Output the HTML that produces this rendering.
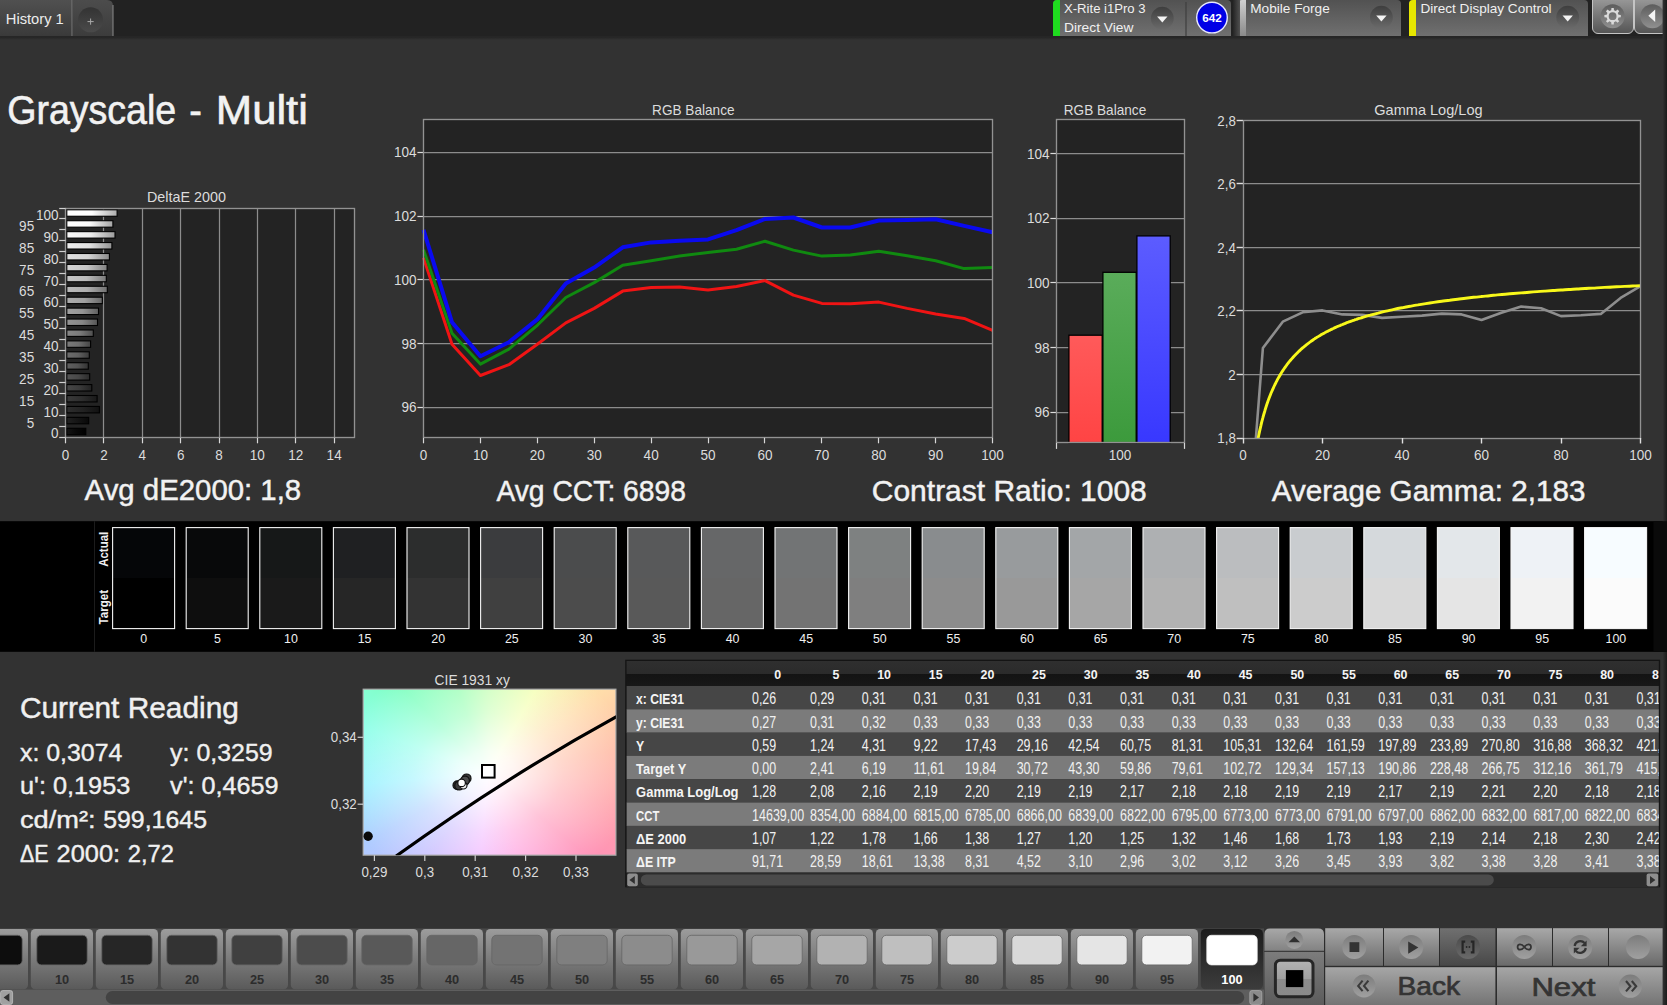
<!DOCTYPE html>
<html lang="en"><head><meta charset="utf-8"><title>Grayscale - Multi</title>
<style>
html,body{margin:0;padding:0;background:#323232;overflow:hidden}
#app{position:relative;width:1667px;height:1005px;overflow:hidden;background:#323232;font-family:"Liberation Sans", sans-serif}
#cie{position:absolute;left:363px;top:689px;width:253px;height:166px;
background:radial-gradient(circle at 0 0,#86ffc6 0,rgba(134,255,198,0) 150px),radial-gradient(circle at 100% 0,#ffdcaa 0,rgba(255,220,170,0) 150px),radial-gradient(circle at 100% 100%,#ff8cb4 0,rgba(255,140,180,0) 170px),radial-gradient(circle at 0 100%,#aac8ff 0,rgba(170,200,255,0) 150px),#ffffff;
background:
radial-gradient(ellipse 150px 120px at 125px 84px, rgba(255,255,255,1) 0%, rgba(255,255,255,.85) 18%, rgba(255,255,255,.45) 50%, rgba(255,255,255,0) 100%),
conic-gradient(from 0deg at 125px 84px, #c4ffb4 0deg, #f4ffb0 30deg, #ffdcaa 55deg, #ffbaa4 80deg, #ffa2aa 105deg, #ff92b8 130deg, #ffa4e0 160deg, #f2b8ff 185deg, #c8bcff 215deg, #aeccff 240deg, #98f2ff 265deg, #8cffe8 290deg, #80ffc0 315deg, #98ffb4 340deg, #c4ffb4 360deg);}
svg{position:absolute;left:0;top:0}
</style></head><body>
<div id="app">
<div id="cie"></div>
<svg width="1667" height="1005" viewBox="0 0 1667 1005" font-family='"Liberation Sans", sans-serif'>
<defs>
<linearGradient id="gTab" x1="0" y1="0" x2="0" y2="1"><stop offset="0" stop-color="#505050"/><stop offset="1" stop-color="#3a3a3a"/></linearGradient>
<linearGradient id="gTab2" x1="0" y1="0" x2="0" y2="1"><stop offset="0" stop-color="#4c4c4c"/><stop offset="1" stop-color="#3c3c3c"/></linearGradient>
<linearGradient id="gPanel" x1="0" y1="0" x2="0" y2="1"><stop offset="0" stop-color="#525252"/><stop offset="1" stop-color="#707070"/></linearGradient>
<linearGradient id="gShadeH" x1="0" y1="0" x2="1" y2="0"><stop offset="0" stop-color="#222222"/><stop offset="1" stop-color="#505050"/></linearGradient>
<linearGradient id="gCirc" x1="0" y1="0" x2="0" y2="1"><stop offset="0" stop-color="#3e3e3e"/><stop offset="1" stop-color="#6a6a6a"/></linearGradient>
<linearGradient id="gCircD" x1="0" y1="0" x2="0" y2="1"><stop offset="0" stop-color="#333333"/><stop offset="1" stop-color="#4a4a4a"/></linearGradient>
<linearGradient id="gBtnTop" x1="0" y1="0" x2="0" y2="1"><stop offset="0" stop-color="#a2a2a2"/><stop offset="1" stop-color="#545454"/></linearGradient>
<linearGradient id="gCircB" x1="0" y1="0" x2="0" y2="1"><stop offset="0" stop-color="#5c5c5c"/><stop offset="1" stop-color="#909090"/></linearGradient>
<linearGradient id="gLightBar" x1="0" y1="0" x2="0" y2="1"><stop offset="0" stop-color="#d0d0d0"/><stop offset="1" stop-color="#8a8a8a"/></linearGradient>
<linearGradient id="gShadow" x1="0" y1="0" x2="0" y2="1"><stop offset="0" stop-color="#222222"/><stop offset="1" stop-color="#323232"/></linearGradient>
<linearGradient id="gRed" x1="0" y1="0" x2="0" y2="1"><stop offset="0" stop-color="#ff5a5a"/><stop offset="1" stop-color="#ff4444"/></linearGradient>
<linearGradient id="gGreen" x1="0" y1="0" x2="0" y2="1"><stop offset="0" stop-color="#5aac5a"/><stop offset="1" stop-color="#3c9a3c"/></linearGradient>
<linearGradient id="gBlue" x1="0" y1="0" x2="0" y2="1"><stop offset="0" stop-color="#5c5cff"/><stop offset="1" stop-color="#3838ff"/></linearGradient>
<linearGradient id="gTile" x1="0" y1="0" x2="0" y2="1"><stop offset="0" stop-color="#9c9c9c"/><stop offset="1" stop-color="#5a5a5a"/></linearGradient>
<linearGradient id="gTileSel" x1="0" y1="0" x2="0" y2="1"><stop offset="0" stop-color="#1c1c1c"/><stop offset="1" stop-color="#3c3c3c"/></linearGradient>
<linearGradient id="gBtn" x1="0" y1="0" x2="0" y2="1"><stop offset="0" stop-color="#a8a8a8"/><stop offset="1" stop-color="#6a6a6a"/></linearGradient>
<linearGradient id="gBtnSel" x1="0" y1="0" x2="0" y2="1"><stop offset="0" stop-color="#707070"/><stop offset="1" stop-color="#484848"/></linearGradient>
<linearGradient id="gBig" x1="0" y1="0" x2="0" y2="1"><stop offset="0" stop-color="#a6a6a6"/><stop offset="1" stop-color="#747474"/></linearGradient>
<linearGradient id="gUp" x1="0" y1="0" x2="0" y2="1"><stop offset="0" stop-color="#a8a8a8"/><stop offset="1" stop-color="#828282"/></linearGradient>
<linearGradient id="gLow" x1="0" y1="0" x2="0" y2="1"><stop offset="0" stop-color="#7c7c7c"/><stop offset="1" stop-color="#5c5c5c"/></linearGradient>
<linearGradient id="gBall" x1="0" y1="0" x2="0" y2="1"><stop offset="0" stop-color="#7c7c7c"/><stop offset="1" stop-color="#a0a0a0"/></linearGradient>
<linearGradient id="gBallSel" x1="0" y1="0" x2="0" y2="1"><stop offset="0" stop-color="#4a4a4a"/><stop offset="1" stop-color="#6a6a6a"/></linearGradient>
<linearGradient id="gIcon" x1="0" y1="0" x2="0" y2="1"><stop offset="0" stop-color="#b4b4b4"/><stop offset="0.5" stop-color="#a0a0a0"/><stop offset="0.5" stop-color="#8c8c8c"/><stop offset="1" stop-color="#8a8a8a"/></linearGradient>
<linearGradient id="gEdge" x1="0" y1="0" x2="1" y2="0"><stop offset="0" stop-color="#323232"/><stop offset="1" stop-color="#1a1a1a"/></linearGradient>
<linearGradient id="gHdr" x1="0" y1="0" x2="0" y2="1"><stop offset="0" stop-color="#2f2f2f"/><stop offset="0.52" stop-color="#2b2b2b"/><stop offset="0.52" stop-color="#131313"/><stop offset="1" stop-color="#181818"/></linearGradient>
</defs>
<rect x="0.00" y="0.00" width="1667.00" height="36.50" fill="#222222"/>
<rect x="0.00" y="36.50" width="1667.00" height="3.50" fill="url(#gShadow)"/>
<rect x="0.00" y="0.00" width="72.00" height="36.00" fill="url(#gTab)"/>
<path d="M72.5 0 H107 Q113 0 113 6 V36 H72.5 Z" fill="url(#gTab2)"/>
<line x1="72.00" y1="0.00" x2="72.00" y2="36.00" stroke="#7a7a7a" stroke-width="1"/>
<line x1="113.00" y1="5.00" x2="113.00" y2="36.00" stroke="#8a8a8a" stroke-width="1"/>
<circle cx="90.6" cy="19.8" r="12.5" fill="url(#gCircD)"/>
<line x1="87.50" y1="21.60" x2="93.70" y2="21.60" stroke="#a8a8a8" stroke-width="1"/>
<line x1="90.60" y1="18.50" x2="90.60" y2="24.70" stroke="#a8a8a8" stroke-width="1"/>
<text x="5.8" y="24.0" font-size="14.6" textLength="58.0" lengthAdjust="spacingAndGlyphs" fill="#ececec">History 1</text>
<path d="M1053.0 36 V4 Q1053.0 0 1057.0 0 H1227.0 Q1231.0 0 1231.0 4 V36 Z" fill="url(#gPanel)"/>
<path d="M1053.0 36 V4 Q1053.0 0 1057.0 0 H1060.0 V36 Z" fill="#1fdc1f"/>
<line x1="1186.00" y1="2.00" x2="1186.00" y2="36.00" stroke="#3e3e3e" stroke-width="1.2"/>
<circle cx="1162.3" cy="18.2" r="11.4" fill="url(#gCirc)"/>
<path d="M1157.1 16.6 h10.4 l-5.2 6 Z" fill="#f4f4f4"/>
<text x="1064.0" y="12.8" font-size="13.3" textLength="81.6" lengthAdjust="spacingAndGlyphs" fill="#f0f0f0">X-Rite i1Pro 3</text>
<text x="1064.0" y="31.5" font-size="13.3" textLength="69.5" lengthAdjust="spacingAndGlyphs" fill="#f0f0f0">Direct View</text>
<circle cx="1212" cy="17.6" r="15.3" fill="#0000e6" stroke="#e8e8ff" stroke-width="1.4"/>
<text x="1202.2" y="21.8" font-size="11.5" font-weight="bold" textLength="19.5" lengthAdjust="spacingAndGlyphs" fill="#ffffff">642</text>
<path d="M1238.0 36 V4 Q1238.0 0 1242.0 0 H1397.0 Q1401.0 0 1401.0 4 V36 Z" fill="url(#gPanel)"/>
<path d="M1238.0 36 V4 Q1238.0 0 1242.0 0 H1246.0 V36 Z" fill="url(#gLightBar)"/>
<rect x="1232.50" y="0.00" width="7.50" height="36.00" fill="url(#gShadeH)"/>
<circle cx="1381.4" cy="17.2" r="11.4" fill="url(#gCirc)"/>
<path d="M1376.2 15.6 h10.4 l-5.2 6 Z" fill="#f4f4f4"/>
<text x="1250.2" y="12.8" font-size="13.3" textLength="79.6" lengthAdjust="spacingAndGlyphs" fill="#f0f0f0">Mobile Forge</text>
<path d="M1409.0 36 V4 Q1409.0 0 1413.0 0 H1584.0 Q1588.0 0 1588.0 4 V36 Z" fill="url(#gPanel)"/>
<path d="M1409.0 36 V4 Q1409.0 0 1413.0 0 H1416.0 V36 Z" fill="#e6e600"/>
<circle cx="1567.7" cy="17.2" r="11.4" fill="url(#gCirc)"/>
<path d="M1562.5 15.6 h10.4 l-5.2 6 Z" fill="#f4f4f4"/>
<text x="1420.4" y="12.8" font-size="13.3" textLength="131.2" lengthAdjust="spacingAndGlyphs" fill="#f0f0f0">Direct Display Control</text>
<rect x="1592.5" y="-6" width="41" height="39.5" rx="5.5" fill="url(#gBtnTop)" stroke="#c4c4c4" stroke-width="1"/>
<rect x="1634.5" y="-6" width="41" height="39.5" rx="5.5" fill="url(#gBtnTop)" stroke="#c4c4c4" stroke-width="1"/>
<circle cx="1612.6" cy="16.2" r="12" fill="url(#gCircB)"/>
<circle cx="1652.4" cy="16.2" r="12" fill="url(#gCircB)"/>
<path d="M1611.23 10.26 L1611.44 7.98 L1613.76 7.98 L1613.97 10.26 L1615.83 11.03 L1617.60 9.57 L1619.23 11.20 L1617.77 12.97 L1618.54 14.83 L1620.82 15.04 L1620.82 17.36 L1618.54 17.57 L1617.77 19.43 L1619.23 21.20 L1617.60 22.83 L1615.83 21.37 L1613.97 22.14 L1613.76 24.42 L1611.44 24.42 L1611.23 22.14 L1609.37 21.37 L1607.60 22.83 L1605.97 21.20 L1607.43 19.43 L1606.66 17.57 L1604.38 17.36 L1604.38 15.04 L1606.66 14.83 L1607.43 12.97 L1605.97 11.20 L1607.60 9.57 L1609.37 11.03 Z M1608.70 16.20 a3.90 3.90 0 1 0 7.80 0 a3.90 3.90 0 1 0 -7.80 0 Z" fill="#dadada" fill-rule="evenodd"/>
<path d="M1655.2 9.4 V22 L1648.3 15.7 Z" fill="#f4f4f4"/>
<text y="123.5" font-size="40" stroke="#f2f2f2" stroke-width="0.6" fill="#f2f2f2"><tspan x="7.3" textLength="168.9" lengthAdjust="spacingAndGlyphs">Grayscale</tspan> <tspan x="189.2" textLength="12.6" lengthAdjust="spacingAndGlyphs">-</tspan> <tspan x="215.8" textLength="92.1" lengthAdjust="spacingAndGlyphs">Multi</tspan></text>
<rect x="65.60" y="208.40" width="288.70" height="229.40" fill="#232323"/>
<line x1="103.50" y1="208.40" x2="103.50" y2="437.80" stroke="#8c8c8c" stroke-width="1.25"/>
<line x1="142.50" y1="208.40" x2="142.50" y2="437.80" stroke="#8c8c8c" stroke-width="1.25"/>
<line x1="180.50" y1="208.40" x2="180.50" y2="437.80" stroke="#8c8c8c" stroke-width="1.25"/>
<line x1="219.50" y1="208.40" x2="219.50" y2="437.80" stroke="#8c8c8c" stroke-width="1.25"/>
<line x1="257.50" y1="208.40" x2="257.50" y2="437.80" stroke="#8c8c8c" stroke-width="1.25"/>
<line x1="295.50" y1="208.40" x2="295.50" y2="437.80" stroke="#8c8c8c" stroke-width="1.25"/>
<line x1="334.50" y1="208.40" x2="334.50" y2="437.80" stroke="#8c8c8c" stroke-width="1.25"/>
<linearGradient id="gb0" x1="0" y1="0" x2="1" y2="0"><stop offset="0" stop-color="rgb(20,20,20)"/><stop offset="0.5" stop-color="rgb(8,8,8)"/><stop offset="1" stop-color="rgb(0,0,0)"/></linearGradient>
<rect x="66.8" y="428.28" width="19.0" height="6.45" fill="url(#gb0)" stroke="#000" stroke-width="1.1"/>
<linearGradient id="gb1" x1="0" y1="0" x2="1" y2="0"><stop offset="0" stop-color="rgb(33,33,33)"/><stop offset="0.5" stop-color="rgb(21,21,21)"/><stop offset="1" stop-color="rgb(8,8,8)"/></linearGradient>
<rect x="66.8" y="417.35" width="21.9" height="6.45" fill="url(#gb1)" stroke="#000" stroke-width="1.1"/>
<linearGradient id="gb2" x1="0" y1="0" x2="1" y2="0"><stop offset="0" stop-color="rgb(46,46,46)"/><stop offset="0.5" stop-color="rgb(34,34,34)"/><stop offset="1" stop-color="rgb(17,17,17)"/></linearGradient>
<rect x="66.8" y="406.43" width="32.6" height="6.45" fill="url(#gb2)" stroke="#000" stroke-width="1.1"/>
<linearGradient id="gb3" x1="0" y1="0" x2="1" y2="0"><stop offset="0" stop-color="rgb(58,58,58)"/><stop offset="0.5" stop-color="rgb(46,46,46)"/><stop offset="1" stop-color="rgb(25,25,25)"/></linearGradient>
<rect x="66.8" y="395.50" width="30.3" height="6.45" fill="url(#gb3)" stroke="#000" stroke-width="1.1"/>
<linearGradient id="gb4" x1="0" y1="0" x2="1" y2="0"><stop offset="0" stop-color="rgb(71,71,71)"/><stop offset="0.5" stop-color="rgb(59,59,59)"/><stop offset="1" stop-color="rgb(34,34,34)"/></linearGradient>
<rect x="66.8" y="384.58" width="25.0" height="6.45" fill="url(#gb4)" stroke="#000" stroke-width="1.1"/>
<linearGradient id="gb5" x1="0" y1="0" x2="1" y2="0"><stop offset="0" stop-color="rgb(84,84,84)"/><stop offset="0.5" stop-color="rgb(72,72,72)"/><stop offset="1" stop-color="rgb(43,43,43)"/></linearGradient>
<rect x="66.8" y="373.66" width="22.9" height="6.45" fill="url(#gb5)" stroke="#000" stroke-width="1.1"/>
<linearGradient id="gb6" x1="0" y1="0" x2="1" y2="0"><stop offset="0" stop-color="rgb(96,96,96)"/><stop offset="0.5" stop-color="rgb(84,84,84)"/><stop offset="1" stop-color="rgb(51,51,51)"/></linearGradient>
<rect x="66.8" y="362.73" width="21.5" height="6.45" fill="url(#gb6)" stroke="#000" stroke-width="1.1"/>
<linearGradient id="gb7" x1="0" y1="0" x2="1" y2="0"><stop offset="0" stop-color="rgb(109,109,109)"/><stop offset="0.5" stop-color="rgb(97,97,97)"/><stop offset="1" stop-color="rgb(60,60,60)"/></linearGradient>
<rect x="66.8" y="351.81" width="22.5" height="6.45" fill="url(#gb7)" stroke="#000" stroke-width="1.1"/>
<linearGradient id="gb8" x1="0" y1="0" x2="1" y2="0"><stop offset="0" stop-color="rgb(122,122,122)"/><stop offset="0.5" stop-color="rgb(110,110,110)"/><stop offset="1" stop-color="rgb(69,69,69)"/></linearGradient>
<rect x="66.8" y="340.89" width="23.8" height="6.45" fill="url(#gb8)" stroke="#000" stroke-width="1.1"/>
<linearGradient id="gb9" x1="0" y1="0" x2="1" y2="0"><stop offset="0" stop-color="rgb(135,135,135)"/><stop offset="0.5" stop-color="rgb(123,123,123)"/><stop offset="1" stop-color="rgb(78,78,78)"/></linearGradient>
<rect x="66.8" y="329.96" width="26.5" height="6.45" fill="url(#gb9)" stroke="#000" stroke-width="1.1"/>
<linearGradient id="gb10" x1="0" y1="0" x2="1" y2="0"><stop offset="0" stop-color="rgb(147,147,147)"/><stop offset="0.5" stop-color="rgb(135,135,135)"/><stop offset="1" stop-color="rgb(86,86,86)"/></linearGradient>
<rect x="66.8" y="319.04" width="30.7" height="6.45" fill="url(#gb10)" stroke="#000" stroke-width="1.1"/>
<linearGradient id="gb11" x1="0" y1="0" x2="1" y2="0"><stop offset="0" stop-color="rgb(160,160,160)"/><stop offset="0.5" stop-color="rgb(148,148,148)"/><stop offset="1" stop-color="rgb(95,95,95)"/></linearGradient>
<rect x="66.8" y="308.11" width="31.7" height="6.45" fill="url(#gb11)" stroke="#000" stroke-width="1.1"/>
<linearGradient id="gb12" x1="0" y1="0" x2="1" y2="0"><stop offset="0" stop-color="rgb(173,173,173)"/><stop offset="0.5" stop-color="rgb(161,161,161)"/><stop offset="1" stop-color="rgb(104,104,104)"/></linearGradient>
<rect x="66.8" y="297.19" width="35.5" height="6.45" fill="url(#gb12)" stroke="#000" stroke-width="1.1"/>
<linearGradient id="gb13" x1="0" y1="0" x2="1" y2="0"><stop offset="0" stop-color="rgb(186,186,186)"/><stop offset="0.5" stop-color="rgb(174,174,174)"/><stop offset="1" stop-color="rgb(112,112,112)"/></linearGradient>
<rect x="66.8" y="286.27" width="40.5" height="6.45" fill="url(#gb13)" stroke="#000" stroke-width="1.1"/>
<linearGradient id="gb14" x1="0" y1="0" x2="1" y2="0"><stop offset="0" stop-color="rgb(198,198,198)"/><stop offset="0.5" stop-color="rgb(186,186,186)"/><stop offset="1" stop-color="rgb(121,121,121)"/></linearGradient>
<rect x="66.8" y="275.34" width="39.5" height="6.45" fill="url(#gb14)" stroke="#000" stroke-width="1.1"/>
<linearGradient id="gb15" x1="0" y1="0" x2="1" y2="0"><stop offset="0" stop-color="rgb(211,211,211)"/><stop offset="0.5" stop-color="rgb(199,199,199)"/><stop offset="1" stop-color="rgb(129,129,129)"/></linearGradient>
<rect x="66.8" y="264.42" width="40.3" height="6.45" fill="url(#gb15)" stroke="#000" stroke-width="1.1"/>
<linearGradient id="gb16" x1="0" y1="0" x2="1" y2="0"><stop offset="0" stop-color="rgb(224,224,224)"/><stop offset="0.5" stop-color="rgb(212,212,212)"/><stop offset="1" stop-color="rgb(138,138,138)"/></linearGradient>
<rect x="66.8" y="253.50" width="42.6" height="6.45" fill="url(#gb16)" stroke="#000" stroke-width="1.1"/>
<linearGradient id="gb17" x1="0" y1="0" x2="1" y2="0"><stop offset="0" stop-color="rgb(237,237,237)"/><stop offset="0.5" stop-color="rgb(225,225,225)"/><stop offset="1" stop-color="rgb(147,147,147)"/></linearGradient>
<rect x="66.8" y="242.57" width="45.1" height="6.45" fill="url(#gb17)" stroke="#000" stroke-width="1.1"/>
<linearGradient id="gb18" x1="0" y1="0" x2="1" y2="0"><stop offset="0" stop-color="rgb(249,249,249)"/><stop offset="0.5" stop-color="rgb(237,237,237)"/><stop offset="1" stop-color="rgb(155,155,155)"/></linearGradient>
<rect x="66.8" y="231.65" width="48.2" height="6.45" fill="url(#gb18)" stroke="#000" stroke-width="1.1"/>
<linearGradient id="gb19" x1="0" y1="0" x2="1" y2="0"><stop offset="0" stop-color="rgb(255,255,255)"/><stop offset="0.5" stop-color="rgb(250,250,250)"/><stop offset="1" stop-color="rgb(164,164,164)"/></linearGradient>
<rect x="66.8" y="220.72" width="46.1" height="6.45" fill="url(#gb19)" stroke="#000" stroke-width="1.1"/>
<linearGradient id="gb20" x1="0" y1="0" x2="1" y2="0"><stop offset="0" stop-color="rgb(255,255,255)"/><stop offset="0.5" stop-color="rgb(255,255,255)"/><stop offset="1" stop-color="rgb(173,173,173)"/></linearGradient>
<rect x="66.8" y="209.80" width="50.3" height="6.45" fill="url(#gb20)" stroke="#000" stroke-width="1.1"/>
<rect x="65.5" y="208.5" width="289.0" height="229.0" fill="none" stroke="#929292" stroke-width="1.35"/>
<line x1="59.20" y1="437.50" x2="65.60" y2="437.50" stroke="#d0d0d0" stroke-width="1.2"/>
<line x1="59.20" y1="426.50" x2="65.60" y2="426.50" stroke="#d0d0d0" stroke-width="1.2"/>
<line x1="59.20" y1="415.50" x2="65.60" y2="415.50" stroke="#d0d0d0" stroke-width="1.2"/>
<line x1="59.20" y1="404.50" x2="65.60" y2="404.50" stroke="#d0d0d0" stroke-width="1.2"/>
<line x1="59.20" y1="393.50" x2="65.60" y2="393.50" stroke="#d0d0d0" stroke-width="1.2"/>
<line x1="59.20" y1="382.50" x2="65.60" y2="382.50" stroke="#d0d0d0" stroke-width="1.2"/>
<line x1="59.20" y1="371.50" x2="65.60" y2="371.50" stroke="#d0d0d0" stroke-width="1.2"/>
<line x1="59.20" y1="360.50" x2="65.60" y2="360.50" stroke="#d0d0d0" stroke-width="1.2"/>
<line x1="59.20" y1="350.50" x2="65.60" y2="350.50" stroke="#d0d0d0" stroke-width="1.2"/>
<line x1="59.20" y1="339.50" x2="65.60" y2="339.50" stroke="#d0d0d0" stroke-width="1.2"/>
<line x1="59.20" y1="328.50" x2="65.60" y2="328.50" stroke="#d0d0d0" stroke-width="1.2"/>
<line x1="59.20" y1="317.50" x2="65.60" y2="317.50" stroke="#d0d0d0" stroke-width="1.2"/>
<line x1="59.20" y1="306.50" x2="65.60" y2="306.50" stroke="#d0d0d0" stroke-width="1.2"/>
<line x1="59.20" y1="295.50" x2="65.60" y2="295.50" stroke="#d0d0d0" stroke-width="1.2"/>
<line x1="59.20" y1="284.50" x2="65.60" y2="284.50" stroke="#d0d0d0" stroke-width="1.2"/>
<line x1="59.20" y1="273.50" x2="65.60" y2="273.50" stroke="#d0d0d0" stroke-width="1.2"/>
<line x1="59.20" y1="262.50" x2="65.60" y2="262.50" stroke="#d0d0d0" stroke-width="1.2"/>
<line x1="59.20" y1="251.50" x2="65.60" y2="251.50" stroke="#d0d0d0" stroke-width="1.2"/>
<line x1="59.20" y1="240.50" x2="65.60" y2="240.50" stroke="#d0d0d0" stroke-width="1.2"/>
<line x1="59.20" y1="229.50" x2="65.60" y2="229.50" stroke="#d0d0d0" stroke-width="1.2"/>
<line x1="59.20" y1="218.50" x2="65.60" y2="218.50" stroke="#d0d0d0" stroke-width="1.2"/>
<line x1="59.20" y1="208.50" x2="65.60" y2="208.50" stroke="#d0d0d0" stroke-width="1.2"/>
<text x="51.1" y="438.4" font-size="14.4" textLength="7.5" lengthAdjust="spacingAndGlyphs" fill="#dcdcdc">0</text>
<text x="26.7" y="427.5" font-size="14.4" textLength="7.5" lengthAdjust="spacingAndGlyphs" fill="#dcdcdc">5</text>
<text x="43.5" y="416.6" font-size="14.4" textLength="15.1" lengthAdjust="spacingAndGlyphs" fill="#dcdcdc">10</text>
<text x="19.1" y="405.7" font-size="14.4" textLength="15.1" lengthAdjust="spacingAndGlyphs" fill="#dcdcdc">15</text>
<text x="43.5" y="394.7" font-size="14.4" textLength="15.1" lengthAdjust="spacingAndGlyphs" fill="#dcdcdc">20</text>
<text x="19.1" y="383.8" font-size="14.4" textLength="15.1" lengthAdjust="spacingAndGlyphs" fill="#dcdcdc">25</text>
<text x="43.5" y="372.9" font-size="14.4" textLength="15.1" lengthAdjust="spacingAndGlyphs" fill="#dcdcdc">30</text>
<text x="19.1" y="362.0" font-size="14.4" textLength="15.1" lengthAdjust="spacingAndGlyphs" fill="#dcdcdc">35</text>
<text x="43.5" y="351.0" font-size="14.4" textLength="15.1" lengthAdjust="spacingAndGlyphs" fill="#dcdcdc">40</text>
<text x="19.1" y="340.1" font-size="14.4" textLength="15.1" lengthAdjust="spacingAndGlyphs" fill="#dcdcdc">45</text>
<text x="43.5" y="329.2" font-size="14.4" textLength="15.1" lengthAdjust="spacingAndGlyphs" fill="#dcdcdc">50</text>
<text x="19.1" y="318.3" font-size="14.4" textLength="15.1" lengthAdjust="spacingAndGlyphs" fill="#dcdcdc">55</text>
<text x="43.5" y="307.4" font-size="14.4" textLength="15.1" lengthAdjust="spacingAndGlyphs" fill="#dcdcdc">60</text>
<text x="19.1" y="296.4" font-size="14.4" textLength="15.1" lengthAdjust="spacingAndGlyphs" fill="#dcdcdc">65</text>
<text x="43.5" y="285.5" font-size="14.4" textLength="15.1" lengthAdjust="spacingAndGlyphs" fill="#dcdcdc">70</text>
<text x="19.1" y="274.6" font-size="14.4" textLength="15.1" lengthAdjust="spacingAndGlyphs" fill="#dcdcdc">75</text>
<text x="43.5" y="263.7" font-size="14.4" textLength="15.1" lengthAdjust="spacingAndGlyphs" fill="#dcdcdc">80</text>
<text x="19.1" y="252.7" font-size="14.4" textLength="15.1" lengthAdjust="spacingAndGlyphs" fill="#dcdcdc">85</text>
<text x="43.5" y="241.8" font-size="14.4" textLength="15.1" lengthAdjust="spacingAndGlyphs" fill="#dcdcdc">90</text>
<text x="19.1" y="230.9" font-size="14.4" textLength="15.1" lengthAdjust="spacingAndGlyphs" fill="#dcdcdc">95</text>
<text x="36.0" y="220.0" font-size="14.4" textLength="22.6" lengthAdjust="spacingAndGlyphs" fill="#dcdcdc">100</text>
<line x1="65.50" y1="437.80" x2="65.50" y2="443.30" stroke="#d8d8d8" stroke-width="1.2"/>
<text x="61.8" y="460.0" font-size="14.4" textLength="7.5" lengthAdjust="spacingAndGlyphs" fill="#dcdcdc">0</text>
<line x1="103.50" y1="437.80" x2="103.50" y2="443.30" stroke="#d8d8d8" stroke-width="1.2"/>
<text x="100.2" y="460.0" font-size="14.4" textLength="7.5" lengthAdjust="spacingAndGlyphs" fill="#dcdcdc">2</text>
<line x1="142.50" y1="437.80" x2="142.50" y2="443.30" stroke="#d8d8d8" stroke-width="1.2"/>
<text x="138.5" y="460.0" font-size="14.4" textLength="7.5" lengthAdjust="spacingAndGlyphs" fill="#dcdcdc">4</text>
<line x1="180.50" y1="437.80" x2="180.50" y2="443.30" stroke="#d8d8d8" stroke-width="1.2"/>
<text x="176.9" y="460.0" font-size="14.4" textLength="7.5" lengthAdjust="spacingAndGlyphs" fill="#dcdcdc">6</text>
<line x1="219.50" y1="437.80" x2="219.50" y2="443.30" stroke="#d8d8d8" stroke-width="1.2"/>
<text x="215.3" y="460.0" font-size="14.4" textLength="7.5" lengthAdjust="spacingAndGlyphs" fill="#dcdcdc">8</text>
<line x1="257.50" y1="437.80" x2="257.50" y2="443.30" stroke="#d8d8d8" stroke-width="1.2"/>
<text x="249.8" y="460.0" font-size="14.4" textLength="15.1" lengthAdjust="spacingAndGlyphs" fill="#dcdcdc">10</text>
<line x1="295.50" y1="437.80" x2="295.50" y2="443.30" stroke="#d8d8d8" stroke-width="1.2"/>
<text x="288.2" y="460.0" font-size="14.4" textLength="15.1" lengthAdjust="spacingAndGlyphs" fill="#dcdcdc">12</text>
<line x1="334.50" y1="437.80" x2="334.50" y2="443.30" stroke="#d8d8d8" stroke-width="1.2"/>
<text x="326.6" y="460.0" font-size="14.4" textLength="15.1" lengthAdjust="spacingAndGlyphs" fill="#dcdcdc">14</text>
<text x="146.9" y="202.0" font-size="14.4" textLength="79.0" lengthAdjust="spacingAndGlyphs" fill="#dcdcdc">DeltaE 2000</text>
<rect x="423.50" y="119.60" width="569.10" height="318.20" fill="#232323"/>
<line x1="423.50" y1="407.50" x2="992.60" y2="407.50" stroke="#8c8c8c" stroke-width="1.25"/>
<line x1="417.40" y1="407.50" x2="423.50" y2="407.50" stroke="#dcdcdc" stroke-width="1.2"/>
<text x="401.5" y="412.2" font-size="14.4" textLength="15.1" lengthAdjust="spacingAndGlyphs" fill="#dcdcdc">96</text>
<line x1="423.50" y1="343.50" x2="992.60" y2="343.50" stroke="#8c8c8c" stroke-width="1.25"/>
<line x1="417.40" y1="343.50" x2="423.50" y2="343.50" stroke="#dcdcdc" stroke-width="1.2"/>
<text x="401.5" y="348.6" font-size="14.4" textLength="15.1" lengthAdjust="spacingAndGlyphs" fill="#dcdcdc">98</text>
<line x1="423.50" y1="279.50" x2="992.60" y2="279.50" stroke="#8c8c8c" stroke-width="1.25"/>
<line x1="417.40" y1="279.50" x2="423.50" y2="279.50" stroke="#dcdcdc" stroke-width="1.2"/>
<text x="394.0" y="284.9" font-size="14.4" textLength="22.6" lengthAdjust="spacingAndGlyphs" fill="#dcdcdc">100</text>
<line x1="423.50" y1="216.50" x2="992.60" y2="216.50" stroke="#8c8c8c" stroke-width="1.25"/>
<line x1="417.40" y1="216.50" x2="423.50" y2="216.50" stroke="#dcdcdc" stroke-width="1.2"/>
<text x="394.0" y="221.1" font-size="14.4" textLength="22.6" lengthAdjust="spacingAndGlyphs" fill="#dcdcdc">102</text>
<line x1="423.50" y1="152.50" x2="992.60" y2="152.50" stroke="#8c8c8c" stroke-width="1.25"/>
<line x1="417.40" y1="152.50" x2="423.50" y2="152.50" stroke="#dcdcdc" stroke-width="1.2"/>
<text x="394.0" y="157.4" font-size="14.4" textLength="22.6" lengthAdjust="spacingAndGlyphs" fill="#dcdcdc">104</text>
<polyline points="423.5,257.7 452.0,344.2 480.4,375.5 508.9,364.7 537.3,344.2 565.8,322.9 594.2,308.4 622.7,291.1 651.1,287.5 679.6,286.9 708.0,290.0 736.5,286.5 765.0,280.6 793.4,295.1 821.9,303.4 850.3,303.8 878.8,302.1 907.2,308.4 935.7,314.0 964.1,318.4 992.6,330.3" fill="none" stroke="#f01414" stroke-width="3.0" stroke-linejoin="round"/>
<polyline points="423.5,249.7 452.0,333.3 480.4,364.1 508.9,349.2 537.3,325.3 565.8,297.5 594.2,282.6 622.7,265.3 651.1,260.7 679.6,256.1 708.0,252.4 736.5,249.3 765.0,241.2 793.4,250.1 821.9,256.1 850.3,255.1 878.8,251.3 907.2,255.7 935.7,260.7 964.1,268.6 992.6,267.6" fill="none" stroke="#108a10" stroke-width="3.0" stroke-linejoin="round"/>
<polyline points="423.5,229.8 452.0,322.3 480.4,356.2 508.9,342.2 537.3,319.4 565.8,283.6 594.2,267.6 622.7,247.3 651.1,242.4 679.6,240.8 708.0,239.4 736.5,230.2 765.0,218.9 793.4,217.5 821.9,227.5 850.3,227.5 878.8,220.5 907.2,219.9 935.7,219.3 964.1,225.9 992.6,232.2" fill="none" stroke="#0a0af0" stroke-width="4.0" stroke-linejoin="round"/>
<rect x="423.5" y="119.5" width="569.0" height="318.0" fill="none" stroke="#929292" stroke-width="1.35"/>
<line x1="423.50" y1="437.80" x2="423.50" y2="443.30" stroke="#d8d8d8" stroke-width="1.2"/>
<text x="419.7" y="460.0" font-size="14.4" textLength="7.5" lengthAdjust="spacingAndGlyphs" fill="#dcdcdc">0</text>
<line x1="480.50" y1="437.80" x2="480.50" y2="443.30" stroke="#d8d8d8" stroke-width="1.2"/>
<text x="472.9" y="460.0" font-size="14.4" textLength="15.1" lengthAdjust="spacingAndGlyphs" fill="#dcdcdc">10</text>
<line x1="537.50" y1="437.80" x2="537.50" y2="443.30" stroke="#d8d8d8" stroke-width="1.2"/>
<text x="529.8" y="460.0" font-size="14.4" textLength="15.1" lengthAdjust="spacingAndGlyphs" fill="#dcdcdc">20</text>
<line x1="594.50" y1="437.80" x2="594.50" y2="443.30" stroke="#d8d8d8" stroke-width="1.2"/>
<text x="586.7" y="460.0" font-size="14.4" textLength="15.1" lengthAdjust="spacingAndGlyphs" fill="#dcdcdc">30</text>
<line x1="651.50" y1="437.80" x2="651.50" y2="443.30" stroke="#d8d8d8" stroke-width="1.2"/>
<text x="643.6" y="460.0" font-size="14.4" textLength="15.1" lengthAdjust="spacingAndGlyphs" fill="#dcdcdc">40</text>
<line x1="708.50" y1="437.80" x2="708.50" y2="443.30" stroke="#d8d8d8" stroke-width="1.2"/>
<text x="700.5" y="460.0" font-size="14.4" textLength="15.1" lengthAdjust="spacingAndGlyphs" fill="#dcdcdc">50</text>
<line x1="764.50" y1="437.80" x2="764.50" y2="443.30" stroke="#d8d8d8" stroke-width="1.2"/>
<text x="757.4" y="460.0" font-size="14.4" textLength="15.1" lengthAdjust="spacingAndGlyphs" fill="#dcdcdc">60</text>
<line x1="821.50" y1="437.80" x2="821.50" y2="443.30" stroke="#d8d8d8" stroke-width="1.2"/>
<text x="814.3" y="460.0" font-size="14.4" textLength="15.1" lengthAdjust="spacingAndGlyphs" fill="#dcdcdc">70</text>
<line x1="878.50" y1="437.80" x2="878.50" y2="443.30" stroke="#d8d8d8" stroke-width="1.2"/>
<text x="871.2" y="460.0" font-size="14.4" textLength="15.1" lengthAdjust="spacingAndGlyphs" fill="#dcdcdc">80</text>
<line x1="935.50" y1="437.80" x2="935.50" y2="443.30" stroke="#d8d8d8" stroke-width="1.2"/>
<text x="928.1" y="460.0" font-size="14.4" textLength="15.1" lengthAdjust="spacingAndGlyphs" fill="#dcdcdc">90</text>
<line x1="992.50" y1="437.80" x2="992.50" y2="443.30" stroke="#d8d8d8" stroke-width="1.2"/>
<text x="981.3" y="460.0" font-size="14.4" textLength="22.6" lengthAdjust="spacingAndGlyphs" fill="#dcdcdc">100</text>
<text x="652.1" y="114.8" font-size="14.4" textLength="82.4" lengthAdjust="spacingAndGlyphs" fill="#dcdcdc">RGB Balance</text>
<rect x="1056.80" y="119.80" width="127.40" height="323.10" fill="#232323"/>
<line x1="1056.80" y1="412.50" x2="1184.20" y2="412.50" stroke="#8c8c8c" stroke-width="1.25"/>
<line x1="1050.40" y1="412.50" x2="1056.80" y2="412.50" stroke="#dcdcdc" stroke-width="1.2"/>
<text x="1034.5" y="417.1" font-size="14.4" textLength="15.1" lengthAdjust="spacingAndGlyphs" fill="#dcdcdc">96</text>
<line x1="1056.80" y1="347.50" x2="1184.20" y2="347.50" stroke="#8c8c8c" stroke-width="1.25"/>
<line x1="1050.40" y1="347.50" x2="1056.80" y2="347.50" stroke="#dcdcdc" stroke-width="1.2"/>
<text x="1034.5" y="352.5" font-size="14.4" textLength="15.1" lengthAdjust="spacingAndGlyphs" fill="#dcdcdc">98</text>
<line x1="1056.80" y1="282.50" x2="1184.20" y2="282.50" stroke="#8c8c8c" stroke-width="1.25"/>
<line x1="1050.40" y1="282.50" x2="1056.80" y2="282.50" stroke="#dcdcdc" stroke-width="1.2"/>
<text x="1026.9" y="287.9" font-size="14.4" textLength="22.6" lengthAdjust="spacingAndGlyphs" fill="#dcdcdc">100</text>
<line x1="1056.80" y1="218.50" x2="1184.20" y2="218.50" stroke="#8c8c8c" stroke-width="1.25"/>
<line x1="1050.40" y1="218.50" x2="1056.80" y2="218.50" stroke="#dcdcdc" stroke-width="1.2"/>
<text x="1026.9" y="223.3" font-size="14.4" textLength="22.6" lengthAdjust="spacingAndGlyphs" fill="#dcdcdc">102</text>
<line x1="1056.80" y1="153.50" x2="1184.20" y2="153.50" stroke="#8c8c8c" stroke-width="1.25"/>
<line x1="1050.40" y1="153.50" x2="1056.80" y2="153.50" stroke="#dcdcdc" stroke-width="1.2"/>
<text x="1026.9" y="158.7" font-size="14.4" textLength="22.6" lengthAdjust="spacingAndGlyphs" fill="#dcdcdc">104</text>
<rect x="1068.9" y="335.2" width="33.3" height="107.4" fill="url(#gRed)" stroke="#000" stroke-width="1.3"/>
<rect x="1102.9" y="272.3" width="33.3" height="170.3" fill="url(#gGreen)" stroke="#000" stroke-width="1.3"/>
<rect x="1136.9" y="235.9" width="33.3" height="206.7" fill="url(#gBlue)" stroke="#000" stroke-width="1.3"/>
<rect x="1056.5" y="119.5" width="128.0" height="323.0" fill="none" stroke="#929292" stroke-width="1.35"/>
<line x1="1056.50" y1="442.90" x2="1056.50" y2="448.90" stroke="#d8d8d8" stroke-width="1.2"/>
<line x1="1184.50" y1="442.90" x2="1184.50" y2="448.90" stroke="#d8d8d8" stroke-width="1.2"/>
<text x="1108.7" y="460.0" font-size="14.4" textLength="22.6" lengthAdjust="spacingAndGlyphs" fill="#dcdcdc">100</text>
<text x="1063.8" y="114.8" font-size="14.4" textLength="82.4" lengthAdjust="spacingAndGlyphs" fill="#dcdcdc">RGB Balance</text>
<rect x="1243.00" y="120.40" width="397.50" height="317.60" fill="#232323"/>
<line x1="1236.60" y1="438.50" x2="1243.00" y2="438.50" stroke="#e0e0e0" stroke-width="1.4"/>
<text x="1217.3" y="443.1" font-size="14.4" textLength="18.5" lengthAdjust="spacingAndGlyphs" fill="#dcdcdc">1,8</text>
<line x1="1243.00" y1="374.50" x2="1640.50" y2="374.50" stroke="#8c8c8c" stroke-width="1.25"/>
<line x1="1236.60" y1="374.50" x2="1243.00" y2="374.50" stroke="#e0e0e0" stroke-width="1.4"/>
<text x="1228.2" y="379.6" font-size="14.4" textLength="7.5" lengthAdjust="spacingAndGlyphs" fill="#dcdcdc">2</text>
<line x1="1243.00" y1="310.50" x2="1640.50" y2="310.50" stroke="#8c8c8c" stroke-width="1.25"/>
<line x1="1236.60" y1="310.50" x2="1243.00" y2="310.50" stroke="#e0e0e0" stroke-width="1.4"/>
<text x="1217.3" y="316.1" font-size="14.4" textLength="18.5" lengthAdjust="spacingAndGlyphs" fill="#dcdcdc">2,2</text>
<line x1="1243.00" y1="247.50" x2="1640.50" y2="247.50" stroke="#8c8c8c" stroke-width="1.25"/>
<line x1="1236.60" y1="247.50" x2="1243.00" y2="247.50" stroke="#e0e0e0" stroke-width="1.4"/>
<text x="1217.3" y="252.5" font-size="14.4" textLength="18.5" lengthAdjust="spacingAndGlyphs" fill="#dcdcdc">2,4</text>
<line x1="1243.00" y1="183.50" x2="1640.50" y2="183.50" stroke="#8c8c8c" stroke-width="1.25"/>
<line x1="1236.60" y1="183.50" x2="1243.00" y2="183.50" stroke="#e0e0e0" stroke-width="1.4"/>
<text x="1217.3" y="189.0" font-size="14.4" textLength="18.5" lengthAdjust="spacingAndGlyphs" fill="#dcdcdc">2,6</text>
<line x1="1236.60" y1="120.50" x2="1243.00" y2="120.50" stroke="#e0e0e0" stroke-width="1.4"/>
<text x="1217.3" y="125.5" font-size="14.4" textLength="18.5" lengthAdjust="spacingAndGlyphs" fill="#dcdcdc">2,8</text>
<polyline points="1255.9,438.0 1262.9,348.0 1282.8,321.7 1302.6,312.3 1322.5,310.4 1342.4,314.4 1362.2,314.9 1382.1,317.9 1402.0,316.7 1421.9,315.6 1441.8,313.6 1461.6,314.4 1481.5,320.0 1501.4,312.7 1521.2,306.6 1541.1,308.3 1561.0,316.1 1580.9,315.3 1600.8,313.9 1620.6,297.9 1640.5,286.2" fill="none" stroke="#8e8e8e" stroke-width="2.6" stroke-linejoin="round"/>
<clipPath id="gclip"><rect x="1243.0" y="120.4" width="397.5" height="317.6"/></clipPath>
<path d="M1254.9 456.9 C1255.3 454.9 1256.2 448.6 1256.9 444.8 C1257.6 441.1 1258.2 437.7 1258.9 434.5 C1259.6 431.3 1260.2 428.4 1260.9 425.6 C1261.5 422.8 1262.2 420.2 1262.9 417.7 C1263.5 415.2 1264.2 412.9 1264.9 410.7 C1265.5 408.5 1266.2 406.5 1266.8 404.5 C1267.5 402.5 1268.2 400.7 1268.8 398.9 C1269.5 397.1 1270.2 395.4 1270.8 393.8 C1271.5 392.1 1272.2 390.6 1272.8 389.1 C1273.5 387.6 1274.1 386.2 1274.8 384.8 C1275.5 383.5 1276.1 382.2 1276.8 380.9 C1277.4 379.6 1278.1 378.4 1278.8 377.3 C1279.4 376.1 1280.1 375.0 1280.8 373.9 C1281.4 372.8 1282.1 371.7 1282.8 370.7 C1283.4 369.7 1284.1 368.7 1284.7 367.8 C1285.4 366.8 1286.1 365.9 1286.7 365.0 C1287.4 364.1 1288.1 363.3 1288.7 362.4 C1289.4 361.6 1290.0 360.8 1290.7 360.0 C1291.4 359.2 1292.0 358.5 1292.7 357.7 C1293.3 357.0 1294.0 356.2 1294.7 355.5 C1295.3 354.8 1296.0 354.2 1296.7 353.5 C1297.3 352.8 1298.0 352.2 1298.7 351.5 C1299.3 350.9 1300.0 350.3 1300.6 349.7 C1301.3 349.1 1302.0 348.5 1302.6 347.9 C1303.3 347.3 1304.0 346.8 1304.6 346.2 C1305.3 345.7 1305.9 345.2 1306.6 344.6 C1307.3 344.1 1307.9 343.6 1308.6 343.1 C1309.2 342.6 1309.9 342.1 1310.6 341.6 C1311.2 341.2 1311.9 340.7 1312.6 340.2 C1313.2 339.8 1313.9 339.3 1314.5 338.9 C1315.2 338.4 1315.9 338.0 1316.5 337.6 C1317.2 337.2 1317.9 336.8 1318.5 336.4 C1319.2 335.9 1319.9 335.6 1320.5 335.2 C1321.2 334.8 1321.8 334.4 1322.5 334.0 C1323.2 333.6 1323.8 333.3 1324.5 332.9 C1325.1 332.5 1325.8 332.2 1326.5 331.8 C1327.1 331.5 1327.8 331.1 1328.5 330.8 C1329.1 330.5 1329.8 330.1 1330.5 329.8 C1331.1 329.5 1331.8 329.2 1332.4 328.9 C1333.1 328.5 1333.8 328.2 1334.4 327.9 C1335.1 327.6 1335.8 327.3 1336.4 327.0 C1337.1 326.7 1337.7 326.4 1338.4 326.2 C1339.1 325.9 1339.7 325.6 1340.4 325.3 C1341.0 325.0 1341.7 324.8 1342.4 324.5 C1343.0 324.2 1343.7 324.0 1344.4 323.7 C1345.0 323.4 1345.7 323.2 1346.3 322.9 C1347.0 322.7 1347.7 322.4 1348.3 322.2 C1349.0 321.9 1349.7 321.7 1350.3 321.5 C1351.0 321.2 1351.7 321.0 1352.3 320.7 C1353.0 320.5 1353.6 320.3 1354.3 320.1 C1355.0 319.8 1355.6 319.6 1356.3 319.4 C1356.9 319.2 1357.6 319.0 1358.3 318.7 C1358.9 318.5 1359.6 318.3 1360.3 318.1 C1360.9 317.9 1360.6 318.0 1362.2 317.5 C1363.9 317.0 1367.5 315.9 1370.2 315.2 C1372.9 314.4 1375.5 313.7 1378.2 313.1 C1380.8 312.4 1383.4 311.8 1386.1 311.1 C1388.8 310.5 1391.4 310.0 1394.0 309.4 C1396.7 308.8 1399.3 308.3 1402.0 307.8 C1404.7 307.2 1407.3 306.7 1410.0 306.3 C1412.6 305.8 1415.2 305.3 1417.9 304.9 C1420.6 304.4 1423.2 304.0 1425.8 303.6 C1428.5 303.2 1431.1 302.8 1433.8 302.4 C1436.5 302.0 1439.1 301.6 1441.8 301.2 C1444.4 300.9 1447.0 300.5 1449.7 300.2 C1452.4 299.8 1455.0 299.5 1457.7 299.2 C1460.3 298.9 1462.9 298.5 1465.6 298.2 C1468.2 297.9 1470.9 297.6 1473.5 297.3 C1476.2 297.1 1478.8 296.8 1481.5 296.5 C1484.2 296.2 1486.8 296.0 1489.5 295.7 C1492.1 295.4 1494.8 295.2 1497.4 294.9 C1500.1 294.7 1502.7 294.5 1505.3 294.2 C1508.0 294.0 1510.6 293.8 1513.3 293.5 C1516.0 293.3 1518.6 293.1 1521.2 292.9 C1523.9 292.7 1526.5 292.5 1529.2 292.2 C1531.9 292.0 1534.5 291.8 1537.2 291.6 C1539.8 291.5 1542.4 291.3 1545.1 291.1 C1547.8 290.9 1550.4 290.7 1553.0 290.5 C1555.7 290.3 1558.3 290.2 1561.0 290.0 C1563.7 289.8 1566.3 289.7 1569.0 289.5 C1571.6 289.3 1574.2 289.2 1576.9 289.0 C1579.6 288.8 1582.2 288.7 1584.8 288.5 C1587.5 288.4 1590.1 288.2 1592.8 288.1 C1595.5 287.9 1598.1 287.8 1600.8 287.6 C1603.4 287.5 1606.0 287.3 1608.7 287.2 C1611.4 287.1 1614.0 286.9 1616.7 286.8 C1619.3 286.7 1621.9 286.5 1624.6 286.4 C1627.2 286.3 1629.9 286.2 1632.5 286.0 C1635.2 285.9 1639.2 285.7 1640.5 285.7" fill="none" stroke="#f8f81a" stroke-width="2.9" stroke-linecap="butt" clip-path="url(#gclip)"/>
<rect x="1243.5" y="120.5" width="397.0" height="318.0" fill="none" stroke="#929292" stroke-width="1.35"/>
<line x1="1243.50" y1="438.00" x2="1243.50" y2="443.50" stroke="#e0e0e0" stroke-width="1.4"/>
<text x="1239.2" y="460.0" font-size="14.4" textLength="7.5" lengthAdjust="spacingAndGlyphs" fill="#dcdcdc">0</text>
<line x1="1322.50" y1="438.00" x2="1322.50" y2="443.50" stroke="#e0e0e0" stroke-width="1.4"/>
<text x="1315.0" y="460.0" font-size="14.4" textLength="15.1" lengthAdjust="spacingAndGlyphs" fill="#dcdcdc">20</text>
<line x1="1402.50" y1="438.00" x2="1402.50" y2="443.50" stroke="#e0e0e0" stroke-width="1.4"/>
<text x="1394.5" y="460.0" font-size="14.4" textLength="15.1" lengthAdjust="spacingAndGlyphs" fill="#dcdcdc">40</text>
<line x1="1481.50" y1="438.00" x2="1481.50" y2="443.50" stroke="#e0e0e0" stroke-width="1.4"/>
<text x="1474.0" y="460.0" font-size="14.4" textLength="15.1" lengthAdjust="spacingAndGlyphs" fill="#dcdcdc">60</text>
<line x1="1561.50" y1="438.00" x2="1561.50" y2="443.50" stroke="#e0e0e0" stroke-width="1.4"/>
<text x="1553.5" y="460.0" font-size="14.4" textLength="15.1" lengthAdjust="spacingAndGlyphs" fill="#dcdcdc">80</text>
<line x1="1640.50" y1="438.00" x2="1640.50" y2="443.50" stroke="#e0e0e0" stroke-width="1.4"/>
<text x="1629.2" y="460.0" font-size="14.4" textLength="22.6" lengthAdjust="spacingAndGlyphs" fill="#dcdcdc">100</text>
<text x="1374.3" y="114.8" font-size="14.4" textLength="108.3" lengthAdjust="spacingAndGlyphs" fill="#dcdcdc">Gamma Log/Log</text>
<text x="84.6" y="500.2" font-size="29" textLength="216.6" lengthAdjust="spacingAndGlyphs" fill="#f2f2f2" stroke="#f2f2f2" stroke-width="0.45">Avg dE2000: 1,8</text>
<text x="496.4" y="500.8" font-size="29" textLength="189.6" lengthAdjust="spacingAndGlyphs" fill="#f2f2f2" stroke="#f2f2f2" stroke-width="0.45">Avg CCT: 6898</text>
<text x="871.8" y="500.6" font-size="29" textLength="275.0" lengthAdjust="spacingAndGlyphs" fill="#f2f2f2" stroke="#f2f2f2" stroke-width="0.45">Contrast Ratio: 1008</text>
<text x="1271.7" y="500.8" font-size="29" textLength="313.7" lengthAdjust="spacingAndGlyphs" fill="#f2f2f2" stroke="#f2f2f2" stroke-width="0.45">Average Gamma: 2,183</text>
<rect x="0.00" y="521.20" width="1667.00" height="130.60" fill="#000000"/>
<rect x="1653.50" y="521.20" width="13.50" height="130.60" fill="#0a0a0a"/>
<line x1="94.50" y1="521.20" x2="94.50" y2="651.80" stroke="#1c1c1c" stroke-width="1"/>
<rect x="112.60" y="527.60" width="62.00" height="50.40" fill="#050608"/>
<rect x="112.60" y="578.00" width="62.00" height="50.60" fill="rgb(0,0,0)"/>
<rect x="112.6" y="527.6" width="62" height="101" fill="none" stroke="#f4f4f4" stroke-width="1.1"/>
<text x="140.3" y="643.2" font-size="13" textLength="6.9" lengthAdjust="spacingAndGlyphs" fill="#f0f0f0">0</text>
<rect x="186.20" y="527.60" width="62.00" height="50.40" fill="#08090a"/>
<rect x="186.20" y="578.00" width="62.00" height="50.60" fill="rgb(14,14,14)"/>
<rect x="186.2" y="527.6" width="62" height="101" fill="none" stroke="#f4f4f4" stroke-width="1.1"/>
<text x="213.9" y="643.2" font-size="13" textLength="6.9" lengthAdjust="spacingAndGlyphs" fill="#f0f0f0">5</text>
<rect x="259.80" y="527.60" width="62.00" height="50.40" fill="#161818"/>
<rect x="259.80" y="578.00" width="62.00" height="50.60" fill="rgb(26,26,26)"/>
<rect x="259.8" y="527.6" width="62" height="101" fill="none" stroke="#f4f4f4" stroke-width="1.1"/>
<text x="284.1" y="643.2" font-size="13" textLength="13.8" lengthAdjust="spacingAndGlyphs" fill="#f0f0f0">10</text>
<rect x="333.40" y="527.60" width="62.00" height="50.40" fill="#1f2022"/>
<rect x="333.40" y="578.00" width="62.00" height="50.60" fill="rgb(38,38,38)"/>
<rect x="333.4" y="527.6" width="62" height="101" fill="none" stroke="#f4f4f4" stroke-width="1.1"/>
<text x="357.7" y="643.2" font-size="13" textLength="13.8" lengthAdjust="spacingAndGlyphs" fill="#f0f0f0">15</text>
<rect x="407.00" y="527.60" width="62.00" height="50.40" fill="#2c2d2d"/>
<rect x="407.00" y="578.00" width="62.00" height="50.60" fill="rgb(51,51,51)"/>
<rect x="407.0" y="527.6" width="62" height="101" fill="none" stroke="#f4f4f4" stroke-width="1.1"/>
<text x="431.3" y="643.2" font-size="13" textLength="13.8" lengthAdjust="spacingAndGlyphs" fill="#f0f0f0">20</text>
<rect x="480.60" y="527.60" width="62.00" height="50.40" fill="#3b3c3e"/>
<rect x="480.60" y="578.00" width="62.00" height="50.60" fill="rgb(64,64,64)"/>
<rect x="480.6" y="527.6" width="62" height="101" fill="none" stroke="#f4f4f4" stroke-width="1.1"/>
<text x="504.9" y="643.2" font-size="13" textLength="13.8" lengthAdjust="spacingAndGlyphs" fill="#f0f0f0">25</text>
<rect x="554.20" y="527.60" width="62.00" height="50.40" fill="#4b4c4d"/>
<rect x="554.20" y="578.00" width="62.00" height="50.60" fill="rgb(76,76,76)"/>
<rect x="554.2" y="527.6" width="62" height="101" fill="none" stroke="#f4f4f4" stroke-width="1.1"/>
<text x="578.5" y="643.2" font-size="13" textLength="13.8" lengthAdjust="spacingAndGlyphs" fill="#f0f0f0">30</text>
<rect x="627.80" y="527.60" width="62.00" height="50.40" fill="#58595a"/>
<rect x="627.80" y="578.00" width="62.00" height="50.60" fill="rgb(89,89,89)"/>
<rect x="627.8" y="527.6" width="62" height="101" fill="none" stroke="#f4f4f4" stroke-width="1.1"/>
<text x="652.1" y="643.2" font-size="13" textLength="13.8" lengthAdjust="spacingAndGlyphs" fill="#f0f0f0">35</text>
<rect x="701.40" y="527.60" width="62.00" height="50.40" fill="#666768"/>
<rect x="701.40" y="578.00" width="62.00" height="50.60" fill="rgb(102,102,102)"/>
<rect x="701.4" y="527.6" width="62" height="101" fill="none" stroke="#f4f4f4" stroke-width="1.1"/>
<text x="725.7" y="643.2" font-size="13" textLength="13.8" lengthAdjust="spacingAndGlyphs" fill="#f0f0f0">40</text>
<rect x="775.00" y="527.60" width="62.00" height="50.40" fill="#727475"/>
<rect x="775.00" y="578.00" width="62.00" height="50.60" fill="rgb(115,115,115)"/>
<rect x="775.0" y="527.6" width="62" height="101" fill="none" stroke="#f4f4f4" stroke-width="1.1"/>
<text x="799.3" y="643.2" font-size="13" textLength="13.8" lengthAdjust="spacingAndGlyphs" fill="#f0f0f0">45</text>
<rect x="848.60" y="527.60" width="62.00" height="50.40" fill="#7e8181"/>
<rect x="848.60" y="578.00" width="62.00" height="50.60" fill="rgb(127,127,127)"/>
<rect x="848.6" y="527.6" width="62" height="101" fill="none" stroke="#f4f4f4" stroke-width="1.1"/>
<text x="872.9" y="643.2" font-size="13" textLength="13.8" lengthAdjust="spacingAndGlyphs" fill="#f0f0f0">50</text>
<rect x="922.20" y="527.60" width="62.00" height="50.40" fill="#898c8e"/>
<rect x="922.20" y="578.00" width="62.00" height="50.60" fill="rgb(140,140,140)"/>
<rect x="922.2" y="527.6" width="62" height="101" fill="none" stroke="#f4f4f4" stroke-width="1.1"/>
<text x="946.5" y="643.2" font-size="13" textLength="13.8" lengthAdjust="spacingAndGlyphs" fill="#f0f0f0">55</text>
<rect x="995.80" y="527.60" width="62.00" height="50.40" fill="#989b9d"/>
<rect x="995.80" y="578.00" width="62.00" height="50.60" fill="rgb(153,153,153)"/>
<rect x="995.8" y="527.6" width="62" height="101" fill="none" stroke="#f4f4f4" stroke-width="1.1"/>
<text x="1020.1" y="643.2" font-size="13" textLength="13.8" lengthAdjust="spacingAndGlyphs" fill="#f0f0f0">60</text>
<rect x="1069.40" y="527.60" width="62.00" height="50.40" fill="#a3a6a8"/>
<rect x="1069.40" y="578.00" width="62.00" height="50.60" fill="rgb(166,166,166)"/>
<rect x="1069.4" y="527.6" width="62" height="101" fill="none" stroke="#f4f4f4" stroke-width="1.1"/>
<text x="1093.7" y="643.2" font-size="13" textLength="13.8" lengthAdjust="spacingAndGlyphs" fill="#f0f0f0">65</text>
<rect x="1143.00" y="527.60" width="62.00" height="50.40" fill="#aeb0b2"/>
<rect x="1143.00" y="578.00" width="62.00" height="50.60" fill="rgb(178,178,178)"/>
<rect x="1143.0" y="527.6" width="62" height="101" fill="none" stroke="#f4f4f4" stroke-width="1.1"/>
<text x="1167.3" y="643.2" font-size="13" textLength="13.8" lengthAdjust="spacingAndGlyphs" fill="#f0f0f0">70</text>
<rect x="1216.60" y="527.60" width="62.00" height="50.40" fill="#bbbdbf"/>
<rect x="1216.60" y="578.00" width="62.00" height="50.60" fill="rgb(191,191,191)"/>
<rect x="1216.6" y="527.6" width="62" height="101" fill="none" stroke="#f4f4f4" stroke-width="1.1"/>
<text x="1240.9" y="643.2" font-size="13" textLength="13.8" lengthAdjust="spacingAndGlyphs" fill="#f0f0f0">75</text>
<rect x="1290.20" y="527.60" width="62.00" height="50.40" fill="#c9cccf"/>
<rect x="1290.20" y="578.00" width="62.00" height="50.60" fill="rgb(204,204,204)"/>
<rect x="1290.2" y="527.6" width="62" height="101" fill="none" stroke="#f4f4f4" stroke-width="1.1"/>
<text x="1314.5" y="643.2" font-size="13" textLength="13.8" lengthAdjust="spacingAndGlyphs" fill="#f0f0f0">80</text>
<rect x="1363.80" y="527.60" width="62.00" height="50.40" fill="#d5d9dc"/>
<rect x="1363.80" y="578.00" width="62.00" height="50.60" fill="rgb(217,217,217)"/>
<rect x="1363.8" y="527.6" width="62" height="101" fill="none" stroke="#f4f4f4" stroke-width="1.1"/>
<text x="1388.1" y="643.2" font-size="13" textLength="13.8" lengthAdjust="spacingAndGlyphs" fill="#f0f0f0">85</text>
<rect x="1437.40" y="527.60" width="62.00" height="50.40" fill="#e3e7ea"/>
<rect x="1437.40" y="578.00" width="62.00" height="50.60" fill="rgb(229,229,229)"/>
<rect x="1437.4" y="527.6" width="62" height="101" fill="none" stroke="#f4f4f4" stroke-width="1.1"/>
<text x="1461.7" y="643.2" font-size="13" textLength="13.8" lengthAdjust="spacingAndGlyphs" fill="#f0f0f0">90</text>
<rect x="1511.00" y="527.60" width="62.00" height="50.40" fill="#eef2f6"/>
<rect x="1511.00" y="578.00" width="62.00" height="50.60" fill="rgb(242,242,242)"/>
<rect x="1511.0" y="527.6" width="62" height="101" fill="none" stroke="#f4f4f4" stroke-width="1.1"/>
<text x="1535.3" y="643.2" font-size="13" textLength="13.8" lengthAdjust="spacingAndGlyphs" fill="#f0f0f0">95</text>
<rect x="1584.60" y="527.60" width="62.00" height="50.40" fill="#f7fcff"/>
<rect x="1584.60" y="578.00" width="62.00" height="50.60" fill="rgb(251,251,251)"/>
<rect x="1584.6" y="527.6" width="62" height="101" fill="none" stroke="#f4f4f4" stroke-width="1.1"/>
<text x="1605.5" y="643.2" font-size="13" textLength="20.7" lengthAdjust="spacingAndGlyphs" fill="#f0f0f0">100</text>
<text transform="translate(108.2 566.8) rotate(-90)" font-size="12.5" font-weight="bold" fill="#f0f0f0" textLength="35" lengthAdjust="spacingAndGlyphs">Actual</text>
<text transform="translate(108.2 624.4) rotate(-90)" font-size="12.5" font-weight="bold" fill="#f0f0f0" textLength="34.5" lengthAdjust="spacingAndGlyphs">Target</text>
<text x="19.9" y="718.4" font-size="29.6" textLength="219.0" lengthAdjust="spacingAndGlyphs" fill="#f0f0f0" stroke="#f0f0f0" stroke-width="0.45">Current Reading</text>
<text x="20.0" y="760.6" font-size="24.6" textLength="102.4" lengthAdjust="spacingAndGlyphs" fill="#f0f0f0" stroke="#f0f0f0" stroke-width="0.4">x: 0,3074</text>
<text x="170.1" y="760.6" font-size="24.6" textLength="102.5" lengthAdjust="spacingAndGlyphs" fill="#f0f0f0" stroke="#f0f0f0" stroke-width="0.4">y: 0,3259</text>
<text x="20.0" y="794.4" font-size="24.6" textLength="110.3" lengthAdjust="spacingAndGlyphs" fill="#f0f0f0" stroke="#f0f0f0" stroke-width="0.4">u': 0,1953</text>
<text x="170.1" y="794.4" font-size="24.6" textLength="108.5" lengthAdjust="spacingAndGlyphs" fill="#f0f0f0" stroke="#f0f0f0" stroke-width="0.4">v': 0,4659</text>
<text y="828.3" font-size="24.6" stroke="#f0f0f0" stroke-width="0.4" fill="#f0f0f0"><tspan x="20.0" textLength="75.6" lengthAdjust="spacingAndGlyphs">cd/m²:</tspan> <tspan x="103.2" textLength="103.8" lengthAdjust="spacingAndGlyphs">599,1645</tspan></text>
<text y="862.1" font-size="24.6" stroke="#f0f0f0" stroke-width="0.4" fill="#f0f0f0"><tspan x="20.0" textLength="28.6" lengthAdjust="spacingAndGlyphs">ΔE</tspan> <tspan x="56.6" textLength="63.5" lengthAdjust="spacingAndGlyphs">2000:</tspan> <tspan x="127.8" textLength="46.2" lengthAdjust="spacingAndGlyphs">2,72</tspan></text>
<rect x="363.2" y="689.2" width="252.7" height="166" fill="none" stroke="#a8a8a8" stroke-width="1.2"/>
<clipPath id="cieclip"><rect x="363.2" y="689.2" width="252.7" height="166"/></clipPath>
<path d="M396.2 856 Q505.5 777.4 616.5 716.6" fill="none" stroke="#000" stroke-width="3.2" clip-path="url(#cieclip)"/>
<rect x="482" y="765" width="12.6" height="12.6" fill="#ffffff" stroke="#000" stroke-width="2"/>
<circle cx="466.6" cy="778.4" r="4.4" fill="#3c3c3c" stroke="#101010" stroke-width="1.2"/>
<circle cx="465.0" cy="780.6" r="4.4" fill="#4c4c4c" stroke="#101010" stroke-width="1.2"/>
<circle cx="457.4" cy="785.2" r="4.4" fill="#2c2c2c" stroke="#101010" stroke-width="1.2"/>
<circle cx="459.2" cy="785.6" r="4.4" fill="#3a3a3a" stroke="#101010" stroke-width="1.2"/>
<circle cx="463.4" cy="785.4" r="3.6" fill="#f0f0f0" stroke="#101010" stroke-width="1.2"/>
<circle cx="461.6" cy="782.9" r="3.8" fill="#ffffff" stroke="#101010" stroke-width="1.2"/>
<circle cx="368.1" cy="836.2" r="4.7" fill="#0a0a0a" clip-path="url(#cieclip)"/>
<line x1="374.40" y1="855.20" x2="374.40" y2="861.00" stroke="#d0d0d0" stroke-width="1.2"/>
<text x="361.4" y="876.6" font-size="14.4" textLength="26.0" lengthAdjust="spacingAndGlyphs" fill="#dcdcdc">0,29</text>
<line x1="424.80" y1="855.20" x2="424.80" y2="861.00" stroke="#d0d0d0" stroke-width="1.2"/>
<text x="415.6" y="876.6" font-size="14.4" textLength="18.5" lengthAdjust="spacingAndGlyphs" fill="#dcdcdc">0,3</text>
<line x1="475.20" y1="855.20" x2="475.20" y2="861.00" stroke="#d0d0d0" stroke-width="1.2"/>
<text x="462.2" y="876.6" font-size="14.4" textLength="26.0" lengthAdjust="spacingAndGlyphs" fill="#dcdcdc">0,31</text>
<line x1="525.60" y1="855.20" x2="525.60" y2="861.00" stroke="#d0d0d0" stroke-width="1.2"/>
<text x="512.6" y="876.6" font-size="14.4" textLength="26.0" lengthAdjust="spacingAndGlyphs" fill="#dcdcdc">0,32</text>
<line x1="576.00" y1="855.20" x2="576.00" y2="861.00" stroke="#d0d0d0" stroke-width="1.2"/>
<text x="563.0" y="876.6" font-size="14.4" textLength="26.0" lengthAdjust="spacingAndGlyphs" fill="#dcdcdc">0,33</text>
<line x1="357.60" y1="804.20" x2="363.20" y2="804.20" stroke="#d0d0d0" stroke-width="1.2"/>
<text x="330.8" y="809.3" font-size="14.4" textLength="26.0" lengthAdjust="spacingAndGlyphs" fill="#dcdcdc">0,32</text>
<line x1="357.60" y1="737.30" x2="363.20" y2="737.30" stroke="#d0d0d0" stroke-width="1.2"/>
<text x="330.8" y="742.4" font-size="14.4" textLength="26.0" lengthAdjust="spacingAndGlyphs" fill="#dcdcdc">0,34</text>
<text x="434.6" y="685.1" font-size="14.4" textLength="75.2" lengthAdjust="spacingAndGlyphs" fill="#dcdcdc">CIE 1931 xy</text>
<rect x="625.20" y="659.70" width="1035.00" height="227.60" fill="#141414"/>
<clipPath id="tclip"><rect x="626.6" y="661.1" width="1032.2" height="226"/></clipPath>
<g clip-path="url(#tclip)">
<rect x="626.00" y="660.50" width="1033.40" height="25.60" fill="url(#gHdr)"/>
<rect x="626.00" y="686.00" width="1033.40" height="23.50" fill="#464646"/>
<rect x="626.00" y="709.30" width="1033.40" height="23.50" fill="#7b7b7b"/>
<rect x="626.00" y="732.60" width="1033.40" height="23.50" fill="#464646"/>
<rect x="626.00" y="755.90" width="1033.40" height="23.50" fill="#7b7b7b"/>
<rect x="626.00" y="779.20" width="1033.40" height="23.50" fill="#464646"/>
<rect x="626.00" y="802.50" width="1033.40" height="23.50" fill="#7b7b7b"/>
<rect x="626.00" y="825.80" width="1033.40" height="23.50" fill="#464646"/>
<rect x="626.00" y="849.10" width="1033.40" height="23.50" fill="#7b7b7b"/>
<text x="774.3" y="679.0" font-size="12" font-weight="bold" textLength="6.9" lengthAdjust="spacingAndGlyphs" fill="#f4f4f4">0</text>
<text x="832.4" y="679.0" font-size="12" font-weight="bold" textLength="6.9" lengthAdjust="spacingAndGlyphs" fill="#f4f4f4">5</text>
<text x="877.2" y="679.0" font-size="12" font-weight="bold" textLength="13.8" lengthAdjust="spacingAndGlyphs" fill="#f4f4f4">10</text>
<text x="928.8" y="679.0" font-size="12" font-weight="bold" textLength="13.8" lengthAdjust="spacingAndGlyphs" fill="#f4f4f4">15</text>
<text x="980.5" y="679.0" font-size="12" font-weight="bold" textLength="13.8" lengthAdjust="spacingAndGlyphs" fill="#f4f4f4">20</text>
<text x="1032.1" y="679.0" font-size="12" font-weight="bold" textLength="13.8" lengthAdjust="spacingAndGlyphs" fill="#f4f4f4">25</text>
<text x="1083.8" y="679.0" font-size="12" font-weight="bold" textLength="13.8" lengthAdjust="spacingAndGlyphs" fill="#f4f4f4">30</text>
<text x="1135.4" y="679.0" font-size="12" font-weight="bold" textLength="13.8" lengthAdjust="spacingAndGlyphs" fill="#f4f4f4">35</text>
<text x="1187.1" y="679.0" font-size="12" font-weight="bold" textLength="13.8" lengthAdjust="spacingAndGlyphs" fill="#f4f4f4">40</text>
<text x="1238.7" y="679.0" font-size="12" font-weight="bold" textLength="13.8" lengthAdjust="spacingAndGlyphs" fill="#f4f4f4">45</text>
<text x="1290.4" y="679.0" font-size="12" font-weight="bold" textLength="13.8" lengthAdjust="spacingAndGlyphs" fill="#f4f4f4">50</text>
<text x="1342.0" y="679.0" font-size="12" font-weight="bold" textLength="13.8" lengthAdjust="spacingAndGlyphs" fill="#f4f4f4">55</text>
<text x="1393.7" y="679.0" font-size="12" font-weight="bold" textLength="13.8" lengthAdjust="spacingAndGlyphs" fill="#f4f4f4">60</text>
<text x="1445.3" y="679.0" font-size="12" font-weight="bold" textLength="13.8" lengthAdjust="spacingAndGlyphs" fill="#f4f4f4">65</text>
<text x="1497.0" y="679.0" font-size="12" font-weight="bold" textLength="13.8" lengthAdjust="spacingAndGlyphs" fill="#f4f4f4">70</text>
<text x="1548.6" y="679.0" font-size="12" font-weight="bold" textLength="13.8" lengthAdjust="spacingAndGlyphs" fill="#f4f4f4">75</text>
<text x="1600.2" y="679.0" font-size="12" font-weight="bold" textLength="13.8" lengthAdjust="spacingAndGlyphs" fill="#f4f4f4">80</text>
<text x="1651.9" y="679.0" font-size="12" font-weight="bold" textLength="13.8" lengthAdjust="spacingAndGlyphs" fill="#f4f4f4">85</text>
<text x="636.1" y="704.2" font-size="15" font-weight="bold" textLength="47.8" lengthAdjust="spacingAndGlyphs" fill="#f4f4f4">x: CIE31</text>
<text x="752.0" y="704.2" font-size="15.6" textLength="24.2" lengthAdjust="spacingAndGlyphs" fill="#f0f0f0">0,26</text>
<text x="810.1" y="704.2" font-size="15.6" textLength="24.2" lengthAdjust="spacingAndGlyphs" fill="#f0f0f0">0,29</text>
<text x="861.8" y="704.2" font-size="15.6" textLength="24.2" lengthAdjust="spacingAndGlyphs" fill="#f0f0f0">0,31</text>
<text x="913.4" y="704.2" font-size="15.6" textLength="24.2" lengthAdjust="spacingAndGlyphs" fill="#f0f0f0">0,31</text>
<text x="965.0" y="704.2" font-size="15.6" textLength="24.2" lengthAdjust="spacingAndGlyphs" fill="#f0f0f0">0,31</text>
<text x="1016.7" y="704.2" font-size="15.6" textLength="24.2" lengthAdjust="spacingAndGlyphs" fill="#f0f0f0">0,31</text>
<text x="1068.3" y="704.2" font-size="15.6" textLength="24.2" lengthAdjust="spacingAndGlyphs" fill="#f0f0f0">0,31</text>
<text x="1120.0" y="704.2" font-size="15.6" textLength="24.2" lengthAdjust="spacingAndGlyphs" fill="#f0f0f0">0,31</text>
<text x="1171.7" y="704.2" font-size="15.6" textLength="24.2" lengthAdjust="spacingAndGlyphs" fill="#f0f0f0">0,31</text>
<text x="1223.3" y="704.2" font-size="15.6" textLength="24.2" lengthAdjust="spacingAndGlyphs" fill="#f0f0f0">0,31</text>
<text x="1275.0" y="704.2" font-size="15.6" textLength="24.2" lengthAdjust="spacingAndGlyphs" fill="#f0f0f0">0,31</text>
<text x="1326.6" y="704.2" font-size="15.6" textLength="24.2" lengthAdjust="spacingAndGlyphs" fill="#f0f0f0">0,31</text>
<text x="1378.2" y="704.2" font-size="15.6" textLength="24.2" lengthAdjust="spacingAndGlyphs" fill="#f0f0f0">0,31</text>
<text x="1429.9" y="704.2" font-size="15.6" textLength="24.2" lengthAdjust="spacingAndGlyphs" fill="#f0f0f0">0,31</text>
<text x="1481.5" y="704.2" font-size="15.6" textLength="24.2" lengthAdjust="spacingAndGlyphs" fill="#f0f0f0">0,31</text>
<text x="1533.2" y="704.2" font-size="15.6" textLength="24.2" lengthAdjust="spacingAndGlyphs" fill="#f0f0f0">0,31</text>
<text x="1584.8" y="704.2" font-size="15.6" textLength="24.2" lengthAdjust="spacingAndGlyphs" fill="#f0f0f0">0,31</text>
<text x="1636.5" y="704.2" font-size="15.6" textLength="24.2" lengthAdjust="spacingAndGlyphs" fill="#f0f0f0">0,31</text>
<text x="636.1" y="727.5" font-size="15" font-weight="bold" textLength="47.8" lengthAdjust="spacingAndGlyphs" fill="#f4f4f4">y: CIE31</text>
<text x="752.0" y="727.5" font-size="15.6" textLength="24.2" lengthAdjust="spacingAndGlyphs" fill="#f0f0f0">0,27</text>
<text x="810.1" y="727.5" font-size="15.6" textLength="24.2" lengthAdjust="spacingAndGlyphs" fill="#f0f0f0">0,31</text>
<text x="861.8" y="727.5" font-size="15.6" textLength="24.2" lengthAdjust="spacingAndGlyphs" fill="#f0f0f0">0,32</text>
<text x="913.4" y="727.5" font-size="15.6" textLength="24.2" lengthAdjust="spacingAndGlyphs" fill="#f0f0f0">0,33</text>
<text x="965.0" y="727.5" font-size="15.6" textLength="24.2" lengthAdjust="spacingAndGlyphs" fill="#f0f0f0">0,33</text>
<text x="1016.7" y="727.5" font-size="15.6" textLength="24.2" lengthAdjust="spacingAndGlyphs" fill="#f0f0f0">0,33</text>
<text x="1068.3" y="727.5" font-size="15.6" textLength="24.2" lengthAdjust="spacingAndGlyphs" fill="#f0f0f0">0,33</text>
<text x="1120.0" y="727.5" font-size="15.6" textLength="24.2" lengthAdjust="spacingAndGlyphs" fill="#f0f0f0">0,33</text>
<text x="1171.7" y="727.5" font-size="15.6" textLength="24.2" lengthAdjust="spacingAndGlyphs" fill="#f0f0f0">0,33</text>
<text x="1223.3" y="727.5" font-size="15.6" textLength="24.2" lengthAdjust="spacingAndGlyphs" fill="#f0f0f0">0,33</text>
<text x="1275.0" y="727.5" font-size="15.6" textLength="24.2" lengthAdjust="spacingAndGlyphs" fill="#f0f0f0">0,33</text>
<text x="1326.6" y="727.5" font-size="15.6" textLength="24.2" lengthAdjust="spacingAndGlyphs" fill="#f0f0f0">0,33</text>
<text x="1378.2" y="727.5" font-size="15.6" textLength="24.2" lengthAdjust="spacingAndGlyphs" fill="#f0f0f0">0,33</text>
<text x="1429.9" y="727.5" font-size="15.6" textLength="24.2" lengthAdjust="spacingAndGlyphs" fill="#f0f0f0">0,33</text>
<text x="1481.5" y="727.5" font-size="15.6" textLength="24.2" lengthAdjust="spacingAndGlyphs" fill="#f0f0f0">0,33</text>
<text x="1533.2" y="727.5" font-size="15.6" textLength="24.2" lengthAdjust="spacingAndGlyphs" fill="#f0f0f0">0,33</text>
<text x="1584.8" y="727.5" font-size="15.6" textLength="24.2" lengthAdjust="spacingAndGlyphs" fill="#f0f0f0">0,33</text>
<text x="1636.5" y="727.5" font-size="15.6" textLength="24.2" lengthAdjust="spacingAndGlyphs" fill="#f0f0f0">0,33</text>
<text x="636.1" y="750.8" font-size="15" font-weight="bold" textLength="8.2" lengthAdjust="spacingAndGlyphs" fill="#f4f4f4">Y</text>
<text x="752.0" y="750.8" font-size="15.6" textLength="24.2" lengthAdjust="spacingAndGlyphs" fill="#f0f0f0">0,59</text>
<text x="810.1" y="750.8" font-size="15.6" textLength="24.2" lengthAdjust="spacingAndGlyphs" fill="#f0f0f0">1,24</text>
<text x="861.8" y="750.8" font-size="15.6" textLength="24.2" lengthAdjust="spacingAndGlyphs" fill="#f0f0f0">4,31</text>
<text x="913.4" y="750.8" font-size="15.6" textLength="24.2" lengthAdjust="spacingAndGlyphs" fill="#f0f0f0">9,22</text>
<text x="965.0" y="750.8" font-size="15.6" textLength="31.2" lengthAdjust="spacingAndGlyphs" fill="#f0f0f0">17,43</text>
<text x="1016.7" y="750.8" font-size="15.6" textLength="31.2" lengthAdjust="spacingAndGlyphs" fill="#f0f0f0">29,16</text>
<text x="1068.3" y="750.8" font-size="15.6" textLength="31.2" lengthAdjust="spacingAndGlyphs" fill="#f0f0f0">42,54</text>
<text x="1120.0" y="750.8" font-size="15.6" textLength="31.2" lengthAdjust="spacingAndGlyphs" fill="#f0f0f0">60,75</text>
<text x="1171.7" y="750.8" font-size="15.6" textLength="31.2" lengthAdjust="spacingAndGlyphs" fill="#f0f0f0">81,31</text>
<text x="1223.3" y="750.8" font-size="15.6" textLength="38.2" lengthAdjust="spacingAndGlyphs" fill="#f0f0f0">105,31</text>
<text x="1275.0" y="750.8" font-size="15.6" textLength="38.2" lengthAdjust="spacingAndGlyphs" fill="#f0f0f0">132,64</text>
<text x="1326.6" y="750.8" font-size="15.6" textLength="38.2" lengthAdjust="spacingAndGlyphs" fill="#f0f0f0">161,59</text>
<text x="1378.2" y="750.8" font-size="15.6" textLength="38.2" lengthAdjust="spacingAndGlyphs" fill="#f0f0f0">197,89</text>
<text x="1429.9" y="750.8" font-size="15.6" textLength="38.2" lengthAdjust="spacingAndGlyphs" fill="#f0f0f0">233,89</text>
<text x="1481.5" y="750.8" font-size="15.6" textLength="38.2" lengthAdjust="spacingAndGlyphs" fill="#f0f0f0">270,80</text>
<text x="1533.2" y="750.8" font-size="15.6" textLength="38.2" lengthAdjust="spacingAndGlyphs" fill="#f0f0f0">316,88</text>
<text x="1584.8" y="750.8" font-size="15.6" textLength="38.2" lengthAdjust="spacingAndGlyphs" fill="#f0f0f0">368,32</text>
<text x="1636.5" y="750.8" font-size="15.6" textLength="38.2" lengthAdjust="spacingAndGlyphs" fill="#f0f0f0">421,55</text>
<text x="636.1" y="774.1" font-size="15" font-weight="bold" textLength="50.2" lengthAdjust="spacingAndGlyphs" fill="#f4f4f4">Target Y</text>
<text x="752.0" y="774.1" font-size="15.6" textLength="24.2" lengthAdjust="spacingAndGlyphs" fill="#f0f0f0">0,00</text>
<text x="810.1" y="774.1" font-size="15.6" textLength="24.2" lengthAdjust="spacingAndGlyphs" fill="#f0f0f0">2,41</text>
<text x="861.8" y="774.1" font-size="15.6" textLength="24.2" lengthAdjust="spacingAndGlyphs" fill="#f0f0f0">6,19</text>
<text x="913.4" y="774.1" font-size="15.6" textLength="31.2" lengthAdjust="spacingAndGlyphs" fill="#f0f0f0">11,61</text>
<text x="965.0" y="774.1" font-size="15.6" textLength="31.2" lengthAdjust="spacingAndGlyphs" fill="#f0f0f0">19,84</text>
<text x="1016.7" y="774.1" font-size="15.6" textLength="31.2" lengthAdjust="spacingAndGlyphs" fill="#f0f0f0">30,72</text>
<text x="1068.3" y="774.1" font-size="15.6" textLength="31.2" lengthAdjust="spacingAndGlyphs" fill="#f0f0f0">43,30</text>
<text x="1120.0" y="774.1" font-size="15.6" textLength="31.2" lengthAdjust="spacingAndGlyphs" fill="#f0f0f0">59,86</text>
<text x="1171.7" y="774.1" font-size="15.6" textLength="31.2" lengthAdjust="spacingAndGlyphs" fill="#f0f0f0">79,61</text>
<text x="1223.3" y="774.1" font-size="15.6" textLength="38.2" lengthAdjust="spacingAndGlyphs" fill="#f0f0f0">102,72</text>
<text x="1275.0" y="774.1" font-size="15.6" textLength="38.2" lengthAdjust="spacingAndGlyphs" fill="#f0f0f0">129,34</text>
<text x="1326.6" y="774.1" font-size="15.6" textLength="38.2" lengthAdjust="spacingAndGlyphs" fill="#f0f0f0">157,13</text>
<text x="1378.2" y="774.1" font-size="15.6" textLength="38.2" lengthAdjust="spacingAndGlyphs" fill="#f0f0f0">190,86</text>
<text x="1429.9" y="774.1" font-size="15.6" textLength="38.2" lengthAdjust="spacingAndGlyphs" fill="#f0f0f0">228,48</text>
<text x="1481.5" y="774.1" font-size="15.6" textLength="38.2" lengthAdjust="spacingAndGlyphs" fill="#f0f0f0">266,75</text>
<text x="1533.2" y="774.1" font-size="15.6" textLength="38.2" lengthAdjust="spacingAndGlyphs" fill="#f0f0f0">312,16</text>
<text x="1584.8" y="774.1" font-size="15.6" textLength="38.2" lengthAdjust="spacingAndGlyphs" fill="#f0f0f0">361,79</text>
<text x="1636.5" y="774.1" font-size="15.6" textLength="38.2" lengthAdjust="spacingAndGlyphs" fill="#f0f0f0">415,47</text>
<text x="636.1" y="797.4" font-size="15" font-weight="bold" textLength="102.4" lengthAdjust="spacingAndGlyphs" fill="#f4f4f4">Gamma Log/Log</text>
<text x="752.0" y="797.4" font-size="15.6" textLength="24.2" lengthAdjust="spacingAndGlyphs" fill="#f0f0f0">1,28</text>
<text x="810.1" y="797.4" font-size="15.6" textLength="24.2" lengthAdjust="spacingAndGlyphs" fill="#f0f0f0">2,08</text>
<text x="861.8" y="797.4" font-size="15.6" textLength="24.2" lengthAdjust="spacingAndGlyphs" fill="#f0f0f0">2,16</text>
<text x="913.4" y="797.4" font-size="15.6" textLength="24.2" lengthAdjust="spacingAndGlyphs" fill="#f0f0f0">2,19</text>
<text x="965.0" y="797.4" font-size="15.6" textLength="24.2" lengthAdjust="spacingAndGlyphs" fill="#f0f0f0">2,20</text>
<text x="1016.7" y="797.4" font-size="15.6" textLength="24.2" lengthAdjust="spacingAndGlyphs" fill="#f0f0f0">2,19</text>
<text x="1068.3" y="797.4" font-size="15.6" textLength="24.2" lengthAdjust="spacingAndGlyphs" fill="#f0f0f0">2,19</text>
<text x="1120.0" y="797.4" font-size="15.6" textLength="24.2" lengthAdjust="spacingAndGlyphs" fill="#f0f0f0">2,17</text>
<text x="1171.7" y="797.4" font-size="15.6" textLength="24.2" lengthAdjust="spacingAndGlyphs" fill="#f0f0f0">2,18</text>
<text x="1223.3" y="797.4" font-size="15.6" textLength="24.2" lengthAdjust="spacingAndGlyphs" fill="#f0f0f0">2,18</text>
<text x="1275.0" y="797.4" font-size="15.6" textLength="24.2" lengthAdjust="spacingAndGlyphs" fill="#f0f0f0">2,19</text>
<text x="1326.6" y="797.4" font-size="15.6" textLength="24.2" lengthAdjust="spacingAndGlyphs" fill="#f0f0f0">2,19</text>
<text x="1378.2" y="797.4" font-size="15.6" textLength="24.2" lengthAdjust="spacingAndGlyphs" fill="#f0f0f0">2,17</text>
<text x="1429.9" y="797.4" font-size="15.6" textLength="24.2" lengthAdjust="spacingAndGlyphs" fill="#f0f0f0">2,19</text>
<text x="1481.5" y="797.4" font-size="15.6" textLength="24.2" lengthAdjust="spacingAndGlyphs" fill="#f0f0f0">2,21</text>
<text x="1533.2" y="797.4" font-size="15.6" textLength="24.2" lengthAdjust="spacingAndGlyphs" fill="#f0f0f0">2,20</text>
<text x="1584.8" y="797.4" font-size="15.6" textLength="24.2" lengthAdjust="spacingAndGlyphs" fill="#f0f0f0">2,18</text>
<text x="1636.5" y="797.4" font-size="15.6" textLength="24.2" lengthAdjust="spacingAndGlyphs" fill="#f0f0f0">2,18</text>
<text x="636.1" y="820.7" font-size="15" font-weight="bold" textLength="23.2" lengthAdjust="spacingAndGlyphs" fill="#f4f4f4">CCT</text>
<text x="752.0" y="820.7" font-size="15.6" textLength="52.2" lengthAdjust="spacingAndGlyphs" fill="#f0f0f0">14639,00</text>
<text x="810.1" y="820.7" font-size="15.6" textLength="45.2" lengthAdjust="spacingAndGlyphs" fill="#f0f0f0">8354,00</text>
<text x="861.8" y="820.7" font-size="15.6" textLength="45.2" lengthAdjust="spacingAndGlyphs" fill="#f0f0f0">6884,00</text>
<text x="913.4" y="820.7" font-size="15.6" textLength="45.2" lengthAdjust="spacingAndGlyphs" fill="#f0f0f0">6815,00</text>
<text x="965.0" y="820.7" font-size="15.6" textLength="45.2" lengthAdjust="spacingAndGlyphs" fill="#f0f0f0">6785,00</text>
<text x="1016.7" y="820.7" font-size="15.6" textLength="45.2" lengthAdjust="spacingAndGlyphs" fill="#f0f0f0">6866,00</text>
<text x="1068.3" y="820.7" font-size="15.6" textLength="45.2" lengthAdjust="spacingAndGlyphs" fill="#f0f0f0">6839,00</text>
<text x="1120.0" y="820.7" font-size="15.6" textLength="45.2" lengthAdjust="spacingAndGlyphs" fill="#f0f0f0">6822,00</text>
<text x="1171.7" y="820.7" font-size="15.6" textLength="45.2" lengthAdjust="spacingAndGlyphs" fill="#f0f0f0">6795,00</text>
<text x="1223.3" y="820.7" font-size="15.6" textLength="45.2" lengthAdjust="spacingAndGlyphs" fill="#f0f0f0">6773,00</text>
<text x="1275.0" y="820.7" font-size="15.6" textLength="45.2" lengthAdjust="spacingAndGlyphs" fill="#f0f0f0">6773,00</text>
<text x="1326.6" y="820.7" font-size="15.6" textLength="45.2" lengthAdjust="spacingAndGlyphs" fill="#f0f0f0">6791,00</text>
<text x="1378.2" y="820.7" font-size="15.6" textLength="45.2" lengthAdjust="spacingAndGlyphs" fill="#f0f0f0">6797,00</text>
<text x="1429.9" y="820.7" font-size="15.6" textLength="45.2" lengthAdjust="spacingAndGlyphs" fill="#f0f0f0">6862,00</text>
<text x="1481.5" y="820.7" font-size="15.6" textLength="45.2" lengthAdjust="spacingAndGlyphs" fill="#f0f0f0">6832,00</text>
<text x="1533.2" y="820.7" font-size="15.6" textLength="45.2" lengthAdjust="spacingAndGlyphs" fill="#f0f0f0">6817,00</text>
<text x="1584.8" y="820.7" font-size="15.6" textLength="45.2" lengthAdjust="spacingAndGlyphs" fill="#f0f0f0">6822,00</text>
<text x="1636.5" y="820.7" font-size="15.6" textLength="45.2" lengthAdjust="spacingAndGlyphs" fill="#f0f0f0">6834,00</text>
<text x="636.1" y="844.0" font-size="15" font-weight="bold" textLength="50.2" lengthAdjust="spacingAndGlyphs" fill="#f4f4f4">ΔE 2000</text>
<text x="752.0" y="844.0" font-size="15.6" textLength="24.2" lengthAdjust="spacingAndGlyphs" fill="#f0f0f0">1,07</text>
<text x="810.1" y="844.0" font-size="15.6" textLength="24.2" lengthAdjust="spacingAndGlyphs" fill="#f0f0f0">1,22</text>
<text x="861.8" y="844.0" font-size="15.6" textLength="24.2" lengthAdjust="spacingAndGlyphs" fill="#f0f0f0">1,78</text>
<text x="913.4" y="844.0" font-size="15.6" textLength="24.2" lengthAdjust="spacingAndGlyphs" fill="#f0f0f0">1,66</text>
<text x="965.0" y="844.0" font-size="15.6" textLength="24.2" lengthAdjust="spacingAndGlyphs" fill="#f0f0f0">1,38</text>
<text x="1016.7" y="844.0" font-size="15.6" textLength="24.2" lengthAdjust="spacingAndGlyphs" fill="#f0f0f0">1,27</text>
<text x="1068.3" y="844.0" font-size="15.6" textLength="24.2" lengthAdjust="spacingAndGlyphs" fill="#f0f0f0">1,20</text>
<text x="1120.0" y="844.0" font-size="15.6" textLength="24.2" lengthAdjust="spacingAndGlyphs" fill="#f0f0f0">1,25</text>
<text x="1171.7" y="844.0" font-size="15.6" textLength="24.2" lengthAdjust="spacingAndGlyphs" fill="#f0f0f0">1,32</text>
<text x="1223.3" y="844.0" font-size="15.6" textLength="24.2" lengthAdjust="spacingAndGlyphs" fill="#f0f0f0">1,46</text>
<text x="1275.0" y="844.0" font-size="15.6" textLength="24.2" lengthAdjust="spacingAndGlyphs" fill="#f0f0f0">1,68</text>
<text x="1326.6" y="844.0" font-size="15.6" textLength="24.2" lengthAdjust="spacingAndGlyphs" fill="#f0f0f0">1,73</text>
<text x="1378.2" y="844.0" font-size="15.6" textLength="24.2" lengthAdjust="spacingAndGlyphs" fill="#f0f0f0">1,93</text>
<text x="1429.9" y="844.0" font-size="15.6" textLength="24.2" lengthAdjust="spacingAndGlyphs" fill="#f0f0f0">2,19</text>
<text x="1481.5" y="844.0" font-size="15.6" textLength="24.2" lengthAdjust="spacingAndGlyphs" fill="#f0f0f0">2,14</text>
<text x="1533.2" y="844.0" font-size="15.6" textLength="24.2" lengthAdjust="spacingAndGlyphs" fill="#f0f0f0">2,18</text>
<text x="1584.8" y="844.0" font-size="15.6" textLength="24.2" lengthAdjust="spacingAndGlyphs" fill="#f0f0f0">2,30</text>
<text x="1636.5" y="844.0" font-size="15.6" textLength="24.2" lengthAdjust="spacingAndGlyphs" fill="#f0f0f0">2,42</text>
<text x="636.1" y="867.3" font-size="15" font-weight="bold" textLength="39.7" lengthAdjust="spacingAndGlyphs" fill="#f4f4f4">ΔE ITP</text>
<text x="752.0" y="867.3" font-size="15.6" textLength="31.2" lengthAdjust="spacingAndGlyphs" fill="#f0f0f0">91,71</text>
<text x="810.1" y="867.3" font-size="15.6" textLength="31.2" lengthAdjust="spacingAndGlyphs" fill="#f0f0f0">28,59</text>
<text x="861.8" y="867.3" font-size="15.6" textLength="31.2" lengthAdjust="spacingAndGlyphs" fill="#f0f0f0">18,61</text>
<text x="913.4" y="867.3" font-size="15.6" textLength="31.2" lengthAdjust="spacingAndGlyphs" fill="#f0f0f0">13,38</text>
<text x="965.0" y="867.3" font-size="15.6" textLength="24.2" lengthAdjust="spacingAndGlyphs" fill="#f0f0f0">8,31</text>
<text x="1016.7" y="867.3" font-size="15.6" textLength="24.2" lengthAdjust="spacingAndGlyphs" fill="#f0f0f0">4,52</text>
<text x="1068.3" y="867.3" font-size="15.6" textLength="24.2" lengthAdjust="spacingAndGlyphs" fill="#f0f0f0">3,10</text>
<text x="1120.0" y="867.3" font-size="15.6" textLength="24.2" lengthAdjust="spacingAndGlyphs" fill="#f0f0f0">2,96</text>
<text x="1171.7" y="867.3" font-size="15.6" textLength="24.2" lengthAdjust="spacingAndGlyphs" fill="#f0f0f0">3,02</text>
<text x="1223.3" y="867.3" font-size="15.6" textLength="24.2" lengthAdjust="spacingAndGlyphs" fill="#f0f0f0">3,12</text>
<text x="1275.0" y="867.3" font-size="15.6" textLength="24.2" lengthAdjust="spacingAndGlyphs" fill="#f0f0f0">3,26</text>
<text x="1326.6" y="867.3" font-size="15.6" textLength="24.2" lengthAdjust="spacingAndGlyphs" fill="#f0f0f0">3,45</text>
<text x="1378.2" y="867.3" font-size="15.6" textLength="24.2" lengthAdjust="spacingAndGlyphs" fill="#f0f0f0">3,93</text>
<text x="1429.9" y="867.3" font-size="15.6" textLength="24.2" lengthAdjust="spacingAndGlyphs" fill="#f0f0f0">3,82</text>
<text x="1481.5" y="867.3" font-size="15.6" textLength="24.2" lengthAdjust="spacingAndGlyphs" fill="#f0f0f0">3,38</text>
<text x="1533.2" y="867.3" font-size="15.6" textLength="24.2" lengthAdjust="spacingAndGlyphs" fill="#f0f0f0">3,28</text>
<text x="1584.8" y="867.3" font-size="15.6" textLength="24.2" lengthAdjust="spacingAndGlyphs" fill="#f0f0f0">3,41</text>
<text x="1636.5" y="867.3" font-size="15.6" textLength="24.2" lengthAdjust="spacingAndGlyphs" fill="#f0f0f0">3,38</text>
<rect x="626.00" y="872.60" width="1033.40" height="14.60" fill="#2c2c2c"/>
<rect x="640.8" y="874.4" width="853" height="11" rx="5.5" fill="#4b4b4b"/>
<rect x="627.2" y="873.6" width="10.6" height="12.6" rx="2" fill="#8e8e8e"/>
<path d="M634.8 876 V884 L629.4 880 Z" fill="#303030"/>
<rect x="1646.6" y="873.6" width="11.6" height="12.6" rx="2" fill="#8e8e8e"/>
<path d="M1650 876 V884 L1655.4 880 Z" fill="#303030"/>
</g>
<rect x="0.00" y="928.40" width="1264.00" height="61.20" fill="#484848"/>
<rect x="0.00" y="989.40" width="1264.00" height="15.60" fill="#5e5e5e"/>
<rect x="105.8" y="991" width="1138.4" height="13" rx="6.5" fill="#434343"/>
<rect x="0.6" y="990.6" width="12" height="13.8" rx="2.2" fill="#a0a0a0" stroke="#c0c0c0" stroke-width="0.8"/>
<path d="M9.4 993.2 V1001.8 L3.6 997.5 Z" fill="#303030"/>
<rect x="1249.8" y="990.6" width="12" height="13.8" rx="2.2" fill="#8a8a8a" stroke="#a8a8a8" stroke-width="0.8"/>
<path d="M1253.4 993.2 V1001.8 L1259 997.5 Z" fill="#303030"/>
<rect x="-34.2" y="929" width="62.2" height="60.3" rx="4.5" fill="url(#gTile)"/>
<rect x="-28.2" y="935.3" width="50.4" height="29.6" rx="4.5" fill="rgb(13,13,13)" stroke="#666" stroke-width="0.8"/>
<rect x="30.8" y="929" width="62.2" height="60.3" rx="4.5" fill="url(#gTile)"/>
<rect x="36.8" y="935.3" width="50.4" height="29.6" rx="4.5" fill="rgb(26,26,26)" stroke="#666" stroke-width="0.8"/>
<text x="54.9" y="984.0" font-size="12.8" font-weight="bold" textLength="14.2" lengthAdjust="spacingAndGlyphs" fill="#2c2c2c">10</text>
<rect x="95.8" y="929" width="62.2" height="60.3" rx="4.5" fill="url(#gTile)"/>
<rect x="101.8" y="935.3" width="50.4" height="29.6" rx="4.5" fill="rgb(38,38,38)" stroke="#666" stroke-width="0.8"/>
<text x="119.9" y="984.0" font-size="12.8" font-weight="bold" textLength="14.2" lengthAdjust="spacingAndGlyphs" fill="#2c2c2c">15</text>
<rect x="160.8" y="929" width="62.2" height="60.3" rx="4.5" fill="url(#gTile)"/>
<rect x="166.8" y="935.3" width="50.4" height="29.6" rx="4.5" fill="rgb(51,51,51)" stroke="#666" stroke-width="0.8"/>
<text x="184.9" y="984.0" font-size="12.8" font-weight="bold" textLength="14.2" lengthAdjust="spacingAndGlyphs" fill="#2c2c2c">20</text>
<rect x="225.8" y="929" width="62.2" height="60.3" rx="4.5" fill="url(#gTile)"/>
<rect x="231.8" y="935.3" width="50.4" height="29.6" rx="4.5" fill="rgb(64,64,64)" stroke="#666" stroke-width="0.8"/>
<text x="249.9" y="984.0" font-size="12.8" font-weight="bold" textLength="14.2" lengthAdjust="spacingAndGlyphs" fill="#2c2c2c">25</text>
<rect x="290.8" y="929" width="62.2" height="60.3" rx="4.5" fill="url(#gTile)"/>
<rect x="296.8" y="935.3" width="50.4" height="29.6" rx="4.5" fill="rgb(76,76,76)" stroke="#666" stroke-width="0.8"/>
<text x="314.9" y="984.0" font-size="12.8" font-weight="bold" textLength="14.2" lengthAdjust="spacingAndGlyphs" fill="#2c2c2c">30</text>
<rect x="355.8" y="929" width="62.2" height="60.3" rx="4.5" fill="url(#gTile)"/>
<rect x="361.8" y="935.3" width="50.4" height="29.6" rx="4.5" fill="rgb(89,89,89)" stroke="#666" stroke-width="0.8"/>
<text x="379.9" y="984.0" font-size="12.8" font-weight="bold" textLength="14.2" lengthAdjust="spacingAndGlyphs" fill="#2c2c2c">35</text>
<rect x="420.8" y="929" width="62.2" height="60.3" rx="4.5" fill="url(#gTile)"/>
<rect x="426.8" y="935.3" width="50.4" height="29.6" rx="4.5" fill="rgb(102,102,102)" stroke="#666" stroke-width="0.8"/>
<text x="444.9" y="984.0" font-size="12.8" font-weight="bold" textLength="14.2" lengthAdjust="spacingAndGlyphs" fill="#2c2c2c">40</text>
<rect x="485.8" y="929" width="62.2" height="60.3" rx="4.5" fill="url(#gTile)"/>
<rect x="491.8" y="935.3" width="50.4" height="29.6" rx="4.5" fill="rgb(115,115,115)" stroke="#666" stroke-width="0.8"/>
<text x="509.9" y="984.0" font-size="12.8" font-weight="bold" textLength="14.2" lengthAdjust="spacingAndGlyphs" fill="#2c2c2c">45</text>
<rect x="550.8" y="929" width="62.2" height="60.3" rx="4.5" fill="url(#gTile)"/>
<rect x="556.8" y="935.3" width="50.4" height="29.6" rx="4.5" fill="rgb(127,127,127)" stroke="#666" stroke-width="0.8"/>
<text x="574.9" y="984.0" font-size="12.8" font-weight="bold" textLength="14.2" lengthAdjust="spacingAndGlyphs" fill="#2c2c2c">50</text>
<rect x="615.8" y="929" width="62.2" height="60.3" rx="4.5" fill="url(#gTile)"/>
<rect x="621.8" y="935.3" width="50.4" height="29.6" rx="4.5" fill="rgb(140,140,140)" stroke="#666" stroke-width="0.8"/>
<text x="639.9" y="984.0" font-size="12.8" font-weight="bold" textLength="14.2" lengthAdjust="spacingAndGlyphs" fill="#2c2c2c">55</text>
<rect x="680.8" y="929" width="62.2" height="60.3" rx="4.5" fill="url(#gTile)"/>
<rect x="686.8" y="935.3" width="50.4" height="29.6" rx="4.5" fill="rgb(153,153,153)" stroke="#666" stroke-width="0.8"/>
<text x="704.9" y="984.0" font-size="12.8" font-weight="bold" textLength="14.2" lengthAdjust="spacingAndGlyphs" fill="#2c2c2c">60</text>
<rect x="745.8" y="929" width="62.2" height="60.3" rx="4.5" fill="url(#gTile)"/>
<rect x="751.8" y="935.3" width="50.4" height="29.6" rx="4.5" fill="rgb(166,166,166)" stroke="#666" stroke-width="0.8"/>
<text x="769.9" y="984.0" font-size="12.8" font-weight="bold" textLength="14.2" lengthAdjust="spacingAndGlyphs" fill="#2c2c2c">65</text>
<rect x="810.8" y="929" width="62.2" height="60.3" rx="4.5" fill="url(#gTile)"/>
<rect x="816.8" y="935.3" width="50.4" height="29.6" rx="4.5" fill="rgb(178,178,178)" stroke="#666" stroke-width="0.8"/>
<text x="834.9" y="984.0" font-size="12.8" font-weight="bold" textLength="14.2" lengthAdjust="spacingAndGlyphs" fill="#2c2c2c">70</text>
<rect x="875.8" y="929" width="62.2" height="60.3" rx="4.5" fill="url(#gTile)"/>
<rect x="881.8" y="935.3" width="50.4" height="29.6" rx="4.5" fill="rgb(191,191,191)" stroke="#666" stroke-width="0.8"/>
<text x="899.9" y="984.0" font-size="12.8" font-weight="bold" textLength="14.2" lengthAdjust="spacingAndGlyphs" fill="#2c2c2c">75</text>
<rect x="940.8" y="929" width="62.2" height="60.3" rx="4.5" fill="url(#gTile)"/>
<rect x="946.8" y="935.3" width="50.4" height="29.6" rx="4.5" fill="rgb(204,204,204)" stroke="#666" stroke-width="0.8"/>
<text x="964.9" y="984.0" font-size="12.8" font-weight="bold" textLength="14.2" lengthAdjust="spacingAndGlyphs" fill="#2c2c2c">80</text>
<rect x="1005.8" y="929" width="62.2" height="60.3" rx="4.5" fill="url(#gTile)"/>
<rect x="1011.8" y="935.3" width="50.4" height="29.6" rx="4.5" fill="rgb(217,217,217)" stroke="#666" stroke-width="0.8"/>
<text x="1029.9" y="984.0" font-size="12.8" font-weight="bold" textLength="14.2" lengthAdjust="spacingAndGlyphs" fill="#2c2c2c">85</text>
<rect x="1070.8" y="929" width="62.2" height="60.3" rx="4.5" fill="url(#gTile)"/>
<rect x="1076.8" y="935.3" width="50.4" height="29.6" rx="4.5" fill="rgb(229,229,229)" stroke="#666" stroke-width="0.8"/>
<text x="1094.9" y="984.0" font-size="12.8" font-weight="bold" textLength="14.2" lengthAdjust="spacingAndGlyphs" fill="#2c2c2c">90</text>
<rect x="1135.8" y="929" width="62.2" height="60.3" rx="4.5" fill="url(#gTile)"/>
<rect x="1141.8" y="935.3" width="50.4" height="29.6" rx="4.5" fill="rgb(242,242,242)" stroke="#666" stroke-width="0.8"/>
<text x="1159.9" y="984.0" font-size="12.8" font-weight="bold" textLength="14.2" lengthAdjust="spacingAndGlyphs" fill="#2c2c2c">95</text>
<rect x="1200.8" y="929" width="62.2" height="60.3" rx="4.5" fill="url(#gTileSel)"/>
<rect x="1206.8" y="935.3" width="50.4" height="29.6" rx="4.5" fill="rgb(255,255,255)" stroke="#eee" stroke-width="0.8"/>
<text x="1221.3" y="984.0" font-size="12.8" font-weight="bold" textLength="21.3" lengthAdjust="spacingAndGlyphs" fill="#ffffff">100</text>
<path d="M1264.4 951 V934 Q1264.4 928.4 1270 928.4 H1318.4 Q1324 928.4 1324 934 V951 Z" fill="url(#gUp)"/>
<rect x="1264.40" y="951.80" width="59.60" height="53.20" fill="url(#gLow)"/>
<line x1="1264.40" y1="951.40" x2="1324.00" y2="951.40" stroke="#3c3c3c" stroke-width="1.2"/>
<circle cx="1294.3" cy="939.9" r="9" fill="url(#gBall)"/>
<path d="M1288.6 942.2 H1300 L1294.3 936.4 Z" fill="#303030"/>
<rect x="1275.4" y="960.2" width="37.6" height="36.6" rx="5" fill="url(#gIcon)" stroke="#262626" stroke-width="3"/>
<rect x="1285.90" y="970.10" width="17.40" height="17.00" fill="#000000"/>
<rect x="1324.00" y="928.20" width="343.00" height="76.80" fill="#2c2c2c"/>
<rect x="1325.20" y="928.20" width="57.80" height="37.60" fill="url(#gBtn)"/>
<rect x="1384.00" y="928.20" width="55.00" height="37.60" fill="url(#gBtn)"/>
<rect x="1440.00" y="928.20" width="55.40" height="37.60" fill="url(#gBtnSel)"/>
<rect x="1497.00" y="928.20" width="55.00" height="37.60" fill="url(#gBtn)"/>
<rect x="1553.00" y="928.20" width="55.00" height="37.60" fill="url(#gBtn)"/>
<rect x="1609.00" y="928.20" width="58.00" height="37.60" fill="url(#gBtn)"/>
<circle cx="1354.3" cy="947.0" r="12.1" fill="url(#gBall)"/>
<circle cx="1411.2" cy="947.0" r="12.1" fill="url(#gBall)"/>
<circle cx="1468.0" cy="947.0" r="12.1" fill="url(#gBallSel)"/>
<circle cx="1524.3" cy="947.0" r="12.1" fill="url(#gBall)"/>
<circle cx="1580.2" cy="947.0" r="12.1" fill="url(#gBall)"/>
<circle cx="1638.0" cy="947.0" r="12.1" fill="url(#gBall)"/>
<rect x="1349.50" y="942.20" width="9.80" height="9.80" fill="#343434"/>
<path d="M1408.2 941.4 V953.8 L1418.4 947.6 Z" fill="#343434"/>
<path d="M1465.2 941.6 H1462.6 V952.4 H1465.2 M1470.8 941.6 H1473.4 V952.4 H1470.8" fill="none" stroke="#262626" stroke-width="2.2"/>
<circle cx="1466.6" cy="947" r="0.9" fill="#262626"/><circle cx="1469.4" cy="947" r="0.9" fill="#262626"/>
<path d="M1524.3 947 C1521.8 943.6 1517.6 943.4 1517.6 947 C1517.6 950.6 1521.8 950.4 1524.3 947 C1526.8 943.6 1531 943.4 1531 947 C1531 950.6 1526.8 950.4 1524.3 947 Z" fill="none" stroke="#343434" stroke-width="1.8"/>
<path d="M1574.6 946 A5.8 5.8 0 0 1 1584.6 943" fill="none" stroke="#343434" stroke-width="2.2"/>
<path d="M1586.6 940.4 V946.2 H1580.8 Z" fill="#343434"/>
<path d="M1585.8 948 A5.8 5.8 0 0 1 1575.8 951" fill="none" stroke="#343434" stroke-width="2.2"/>
<path d="M1573.8 953.6 V947.8 H1579.6 Z" fill="#343434"/>
<rect x="1325.20" y="967.20" width="170.20" height="37.80" fill="url(#gBig)"/>
<rect x="1497.00" y="967.20" width="170.00" height="37.80" fill="url(#gBig)"/>
<circle cx="1364.0" cy="985.9" r="11.5" fill="url(#gBall)"/>
<circle cx="1630.3" cy="986.2" r="11.6" fill="url(#gBall)"/>
<path d="M1362.6 980.6 L1358.2 985.9 L1362.6 991.2 M1368.4 980.6 L1364 985.9 L1368.4 991.2" fill="none" stroke="#3a3a3a" stroke-width="2.1"/>
<path d="M1626 981 L1630.4 986.2 L1626 991.4 M1631.8 981 L1636.2 986.2 L1631.8 991.4" fill="none" stroke="#3a3a3a" stroke-width="2.1"/>
<text x="1397.5" y="995.2" font-size="26.5" textLength="62.6" lengthAdjust="spacingAndGlyphs" fill="#343434" stroke="#343434" stroke-width="0.7">Back</text>
<text x="1531.4" y="995.6" font-size="26.5" textLength="64.0" lengthAdjust="spacingAndGlyphs" fill="#343434" stroke="#343434" stroke-width="0.7">Next</text>
<rect x="1662.60" y="0.00" width="4.40" height="521.20" fill="url(#gEdge)"/>
<rect x="1662.60" y="652.00" width="4.40" height="353.00" fill="url(#gEdge)"/>
</svg>
</div>
</body></html>
